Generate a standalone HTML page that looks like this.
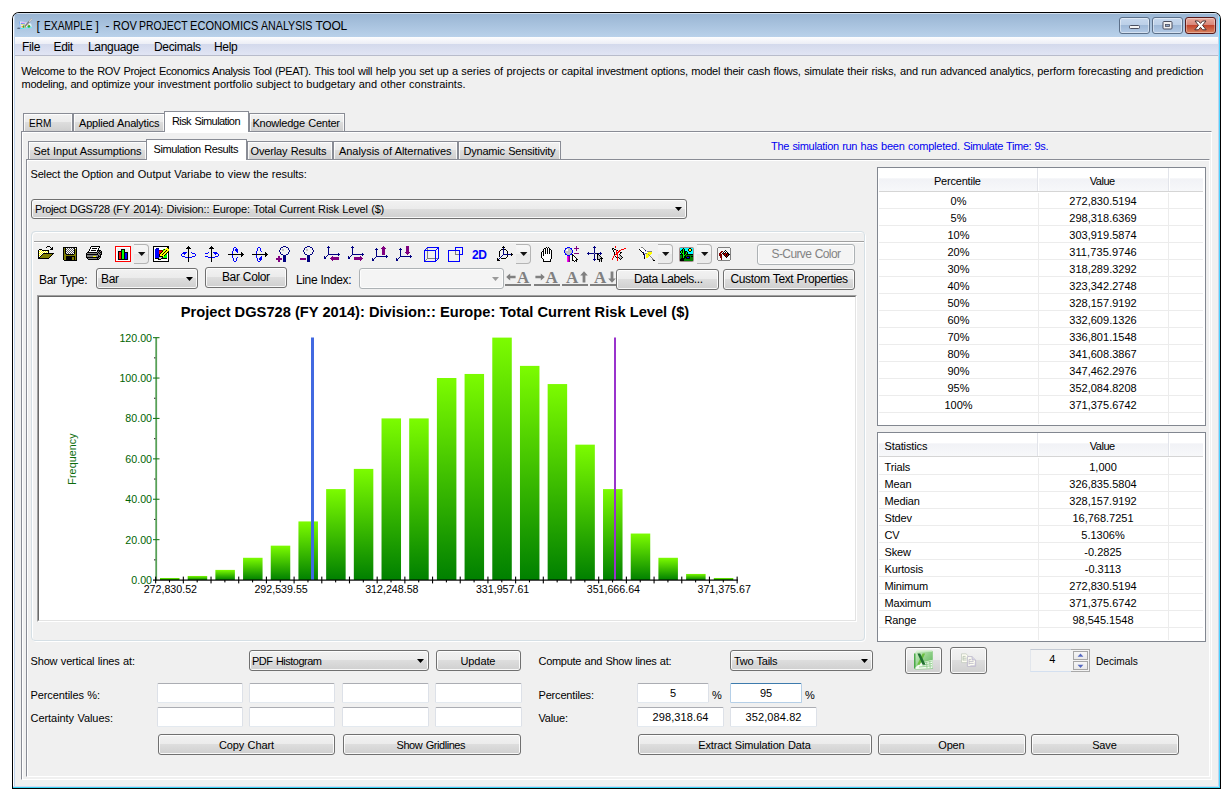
<!DOCTYPE html>
<html lang="en"><head><meta charset="utf-8"><title>ROV Project Economics Analysis Tool</title>
<style>
html,body{margin:0;padding:0;}
body{width:1232px;height:800px;position:relative;overflow:hidden;background:#fff;font-family:"Liberation Sans",sans-serif;font-size:11px;color:#000;}
div,span.t,svg{position:absolute;box-sizing:border-box;}
span.t{white-space:pre;}
.btn{border:1px solid #707070;border-radius:3px;background:linear-gradient(#f2f2f2 0%,#ebebeb 48%,#dddddd 50%,#cfcfcf 100%);box-shadow:inset 0 0 0 1px rgba(255,255,255,.85);}
.btnd{border:1px solid #adb2b5;border-radius:3px;background:#f4f4f4;box-shadow:inset 0 0 0 1px #fcfcfc;}
.tbx{border:1px solid #dde1e8;border-top-color:#abadb3;border-bottom-color:#e3e9ef;border-radius:1.5px;background:#fff;}
.tbxf{border:1px solid #b5cfe7;border-top-color:#3d7bad;border-radius:1.5px;background:#fff;}
.tab{border:1px solid #898c95;border-bottom:none;background:linear-gradient(#f2f2f2 0%,#ebebeb 48%,#dddddd 50%,#cfcfcf 100%);box-shadow:inset 1px 1px 0 rgba(255,255,255,.8), inset -1px 0 0 rgba(255,255,255,.8);}
.tabs{border:1px solid #898c95;border-bottom:none;background:#fff;}
.lv{border:1px solid #828790;background:#fff;}
.hdr{background:linear-gradient(#fff 0%,#fff 45%,#f1f2f6 46%,#f7f8fa 100%);border-bottom:1px solid #d5d5d5;}

</style></head>
<body>
<div style="left:12px;top:12px;width:1209px;height:777px;background:#000;border-radius:7px 7px 0 0;"></div>
<div style="left:13px;top:13px;width:1207px;height:775px;background:#f0f0f0;border-radius:6px 6px 0 0;overflow:hidden;"><div style="left:0;top:0;width:1207px;height:24px;background:linear-gradient(#98b4d2,#b9d1ea);"></div><div style="left:0;top:0;width:1207px;height:1px;background:rgba(255,255,255,.55);"></div><div style="left:0;top:24px;width:1207px;height:18px;background:linear-gradient(#fdfdfe 0%,#eceef6 38%,#d3d9ec 39%,#e1e5f4 100%);"></div><div style="left:0;top:42px;width:1207px;height:1px;background:#b8bccb;"></div><div style="left:0;top:0;width:1px;height:775px;background:#fff;"></div><div style="left:1px;top:0;width:1px;height:775px;background:#c0d4ec;"></div><div style="left:1205px;top:0;width:1px;height:775px;background:#c0d4ec;"></div><div style="left:0;top:773px;width:1207px;height:1px;background:#d4daf0;"></div><div style="left:1206px;top:0;width:1px;height:775px;background:#4fd4ff;"></div><div style="left:0;top:774px;width:1207px;height:1px;background:#35d4f4;"></div></div>
<svg style="left:15px;top:15px" width="22" height="20" viewBox="0 0 22 20"><ellipse cx="4.4" cy="13.3" rx="2.4" ry=".8" fill="#2a3850" opacity=".7"/><path d="M4 5.9 L16 8.2 L17 12.5 L5 14 Z" fill="#e2f2fb"/><path d="M4 5.9 L4.9 6.1 L5.8 13.9 L5 14 Z" fill="#6f9fe8"/><path d="M4 5.9 L16 8.2 L16.1 8.8 L4.1 6.6 Z" fill="#a9c8f2"/><path d="M5.6 13.1 L16.9 11.8 L17 12.5 L5.7 13.95 Z" fill="#43e6ee"/><path d="M5.9 7.1 L11.6 7.7 L11.6 8.5 L5.9 7.9 Z" fill="#f2a4ea"/><path d="M5.9 8.2 L9.9 8.6 L9.9 9.4 L5.9 9 Z" fill="#3c6cf0"/><path d="M5.9 9.3 L9.9 9.6 L9.9 10.3 L5.9 10 Z" fill="#efe24a"/><circle cx="7.3" cy="11.7" r=".85" fill="#f09433"/><rect x="8" y="10.4" width="1.3" height="2.4" fill="#2fb02f"/><circle cx="10.3" cy="11.9" r=".8" fill="#f09433"/><circle cx="13.9" cy="11.3" r="1.35" fill="#2fb02f"/><circle cx="13.5" cy="10" r=".6" fill="#d89030"/><path d="M16.4 4.3 L10.2 10.9" stroke="#7e7e7e" stroke-width="1.5" stroke-linecap="round"/><path d="M16.6 4.1 L14.6 6.2" stroke="#d4d4d4" stroke-width="1.3" stroke-linecap="round"/></svg>
<span class="t" style="left:44.00px;top:19px;font-size:12px;line-height:14px;transform:scaleX(0.8571);transform-origin:0 0;">EXAMPLE</span>
<span class="t" style="left:112.80px;top:19px;font-size:12px;line-height:14px;transform:scaleX(0.9225);transform-origin:0 0;">ROV</span>
<span class="t" style="left:139.30px;top:19px;font-size:12px;line-height:14px;transform:scaleX(0.8658);transform-origin:0 0;">PROJECT</span>
<span class="t" style="left:190.40px;top:19px;font-size:12px;line-height:14px;transform:scaleX(0.9241);transform-origin:0 0;">ECONOMICS</span>
<span class="t" style="left:261.40px;top:19px;font-size:12px;line-height:14px;transform:scaleX(0.8891);transform-origin:0 0;">ANALYSIS</span>
<span class="t" style="left:315.40px;top:19px;font-size:12px;line-height:14px;letter-spacing:-0.223px;">TOOL</span>
<span class="t" style="left:36.50px;top:19px;font-size:12px;line-height:14px;">[</span>
<span class="t" style="left:95.50px;top:19px;font-size:12px;line-height:14px;">]</span>
<span class="t" style="left:105.50px;top:19px;font-size:12px;line-height:14px;">-</span>
<span class="t" style="left:22.00px;top:40px;font-size:12px;line-height:14px;letter-spacing:-0.330px;">File</span>
<span class="t" style="left:53.50px;top:40px;font-size:12px;line-height:14px;letter-spacing:-0.330px;">Edit</span>
<span class="t" style="left:88.00px;top:40px;font-size:12px;line-height:14px;letter-spacing:-0.330px;">Language</span>
<span class="t" style="left:154.00px;top:40px;font-size:12px;line-height:14px;letter-spacing:-0.330px;">Decimals</span>
<span class="t" style="left:214.00px;top:40px;font-size:12px;line-height:14px;letter-spacing:-0.330px;">Help</span>
<div style="left:1119px;top:17px;width:31px;height:17px;border:1px solid #5c7089;border-radius:3px;background:linear-gradient(#c6d8ee 0%,#bcd0e8 45%,#9fb9d8 50%,#b3cae6 100%);box-shadow:inset 0 0 0 1px rgba(255,255,255,.45);"></div>
<div style="left:1152px;top:17px;width:31px;height:17px;border:1px solid #5c7089;border-radius:3px;background:linear-gradient(#c6d8ee 0%,#bcd0e8 45%,#9fb9d8 50%,#b3cae6 100%);box-shadow:inset 0 0 0 1px rgba(255,255,255,.45);"></div>
<div style="left:1185px;top:17px;width:31px;height:17px;border:1px solid #5a1a1a;border-radius:3px;background:linear-gradient(#e9ab9d 0%,#d9877a 45%,#c4452d 50%,#d8835f 100%);box-shadow:inset 0 0 0 1px rgba(255,255,255,.35);"></div>
<svg style="left:1119px;top:17px" width="31" height="17" viewBox="0 0 31 17"><rect x="10.5" y="8.5" width="10" height="3" rx="1" fill="#f4f4f4" stroke="#4a4f60"/></svg>
<svg style="left:1152px;top:17px" width="31" height="17" viewBox="0 0 31 17"><rect x="11" y="4.5" width="9" height="7.5" rx="1" fill="#f0f0f0" stroke="#4a4f60"/><rect x="13.5" y="7.5" width="4" height="2" fill="#8ea5c6" stroke="#4a4f60" stroke-width=".8"/></svg>
<svg style="left:1185px;top:17px" width="31" height="17" viewBox="0 0 31 17"><path d="M10 4 L13.4 4 L15.5 6.4 L17.6 4 L21 4 L17.5 8.3 L21.2 12.8 L17.6 12.8 L15.5 10.3 L13.4 12.8 L9.8 12.8 L13.5 8.3 Z" fill="#fff" stroke="#4a3434" stroke-width="1"/></svg>
<span class="t" style="left:21.30px;top:65px;font-size:11px;line-height:12px;letter-spacing:-0.362px;word-spacing:0.712px;">Welcome to the ROV Project</span>
<span class="t" style="left:159.00px;top:65px;font-size:11px;line-height:12px;letter-spacing:-0.395px;word-spacing:0.745px;">Economics Analysis Tool (PEAT).</span>
<span class="t" style="left:314.50px;top:65px;font-size:11px;line-height:12px;letter-spacing:-0.237px;word-spacing:0.587px;">This tool will help you set up a</span>
<span class="t" style="left:461.25px;top:65px;font-size:11px;line-height:12px;letter-spacing:-0.012px;word-spacing:0.362px;">series of projects or capital</span>
<span class="t" style="left:596.50px;top:65px;font-size:11px;line-height:12px;letter-spacing:-0.207px;word-spacing:0.557px;">investment options, model their</span>
<span class="t" style="left:747.50px;top:65px;font-size:11px;line-height:12px;letter-spacing:-0.150px;word-spacing:0.500px;">cash flows, simulate their risks,</span>
<span class="t" style="left:900.00px;top:65px;font-size:11px;line-height:12px;letter-spacing:-0.175px;word-spacing:0.525px;">and run advanced analytics,</span>
<span class="t" style="left:1037.30px;top:65px;font-size:11px;line-height:12px;letter-spacing:-0.060px;word-spacing:0.410px;">perform forecasting and prediction</span>
<span class="t" style="left:21.50px;top:78px;font-size:11px;line-height:12px;letter-spacing:-0.245px;word-spacing:0.595px;">modeling, and optimize your</span>
<span class="t" style="left:157.75px;top:78px;font-size:11px;line-height:12px;letter-spacing:-0.049px;word-spacing:0.399px;">investment portfolio subject to</span>
<span class="t" style="left:306.25px;top:78px;font-size:11px;line-height:12px;letter-spacing:0.016px;word-spacing:0.334px;">budgetary and other constraints.</span>
<div style="left:21px;top:131px;width:1191px;height:649px;border-left:1px solid #898c95;border-top:1px solid #898c95;border-right:1px solid #fff;border-bottom:1px solid #fff;"></div>
<div style="left:22px;top:132px;width:1189px;height:647px;border-left:1px solid #fff;border-top:1px solid #fff;"></div>
<div class="tab" style="left:23px;top:113px;width:50px;height:18px;"></div>
<span class="t" style="left:28.50px;top:117px;font-size:11px;line-height:12px;transform:scaleX(0.9119);transform-origin:0 0;">ERM</span>
<div class="tab" style="left:73px;top:113px;width:92px;height:18px;"></div>
<span class="t" style="left:79.00px;top:117px;font-size:11px;line-height:12px;letter-spacing:-0.201px;word-spacing:0.551px;">Applied Analytics</span>
<div class="tab" style="left:249px;top:113px;width:96px;height:18px;"></div>
<span class="t" style="left:252.50px;top:117px;font-size:11px;line-height:12px;letter-spacing:-0.240px;word-spacing:0.590px;">Knowledge Center</span>
<div class="tabs" style="left:164px;top:111px;width:85px;height:21px;"></div>
<span class="t" style="left:172.00px;top:115px;font-size:11px;line-height:12px;letter-spacing:-0.589px;word-spacing:0.939px;">Risk Simulation</span>
<div style="left:26px;top:159px;width:1184px;height:618px;border-left:1px solid #898c95;border-top:1px solid #898c95;border-right:1px solid #fff;border-bottom:1px solid #fff;"></div>
<div style="left:27px;top:160px;width:1182px;height:616px;border-left:1px solid #fff;border-top:1px solid #fff;"></div>
<div class="tab" style="left:28px;top:141px;width:119px;height:18px;"></div>
<span class="t" style="left:33.50px;top:145px;font-size:11px;line-height:12px;letter-spacing:-0.120px;word-spacing:0.470px;">Set Input Assumptions</span>
<div class="tab" style="left:247px;top:141px;width:86px;height:18px;"></div>
<span class="t" style="left:250.50px;top:145px;font-size:11px;line-height:12px;letter-spacing:-0.153px;word-spacing:0.503px;">Overlay Results</span>
<div class="tab" style="left:333px;top:141px;width:125px;height:18px;"></div>
<span class="t" style="left:339.00px;top:145px;font-size:11px;line-height:12px;letter-spacing:-0.063px;word-spacing:0.413px;">Analysis of Alternatives</span>
<div class="tab" style="left:458px;top:141px;width:103px;height:18px;"></div>
<span class="t" style="left:463.50px;top:145px;font-size:11px;line-height:12px;letter-spacing:-0.218px;word-spacing:0.568px;">Dynamic Sensitivity</span>
<div class="tabs" style="left:146px;top:139px;width:101px;height:21px;"></div>
<span class="t" style="left:153.50px;top:143px;font-size:11px;line-height:12px;letter-spacing:-0.403px;word-spacing:0.753px;">Simulation Results</span>
<span class="t" style="left:771.00px;top:140px;font-size:11px;line-height:12px;color:#0000f0;letter-spacing:-0.313px;word-spacing:0.663px;">The simulation run has</span>
<span class="t" style="left:881.00px;top:140px;font-size:11px;line-height:12px;color:#0000f0;letter-spacing:-0.207px;word-spacing:0.557px;">been completed.</span>
<span class="t" style="left:963.30px;top:140px;font-size:11px;line-height:12px;color:#0000f0;letter-spacing:-0.399px;word-spacing:0.749px;">Simulate Time: 9s.</span>
<span class="t" style="left:30.50px;top:168px;font-size:11px;line-height:12px;letter-spacing:-0.173px;word-spacing:0.523px;">Select the Option and</span>
<span class="t" style="left:137.70px;top:168px;font-size:11px;line-height:12px;letter-spacing:0.043px;word-spacing:0.307px;">Output Variabe to view</span>
<span class="t" style="left:253.30px;top:168px;font-size:11px;line-height:12px;letter-spacing:-0.066px;word-spacing:0.416px;">the results:</span>
<div class="btn" style="left:31px;top:199px;width:656px;height:20px;"></div>
<svg style="left:675px;top:207px" width="8" height="5" viewBox="0 0 8 5"><path d="M0 0 L7 0 L3.5 4 Z" fill="#000"/></svg>
<span class="t" style="left:35.00px;top:203px;font-size:11px;line-height:12px;letter-spacing:-0.398px;word-spacing:0.748px;">Project DGS728 (FY</span>
<span class="t" style="left:133.20px;top:203px;font-size:11px;line-height:12px;letter-spacing:-0.198px;word-spacing:0.548px;">2014): Division:: Europe:</span>
<span class="t" style="left:253.30px;top:203px;font-size:11px;line-height:12px;letter-spacing:-0.160px;word-spacing:0.510px;">Total Current Risk Level ($)</span>
<div style="left:32px;top:232px;width:834px;height:410px;border:1px solid #fff;border-radius:4px;"></div>
<div style="left:31px;top:231px;width:834px;height:410px;border:1px solid #d5dfe5;border-radius:4px;"></div>
<div style="left:34px;top:241px;width:830px;height:1px;background:#a0a0a0;"></div>
<div style="left:34px;top:242px;width:830px;height:1px;background:#fff;"></div>
<svg style="left:38px;top:246px" width="16" height="13" viewBox="0 0 16 13" shape-rendering="crispEdges"><rect x="9" y="0" width="3" height="1" fill="#000"/><rect x="8" y="1" width="1" height="1" fill="#000"/><rect x="12" y="1" width="1" height="1" fill="#000"/><rect x="14" y="1" width="1" height="1" fill="#000"/><rect x="13" y="2" width="2" height="1" fill="#000"/><rect x="1" y="3" width="3" height="1" fill="#000"/><rect x="12" y="3" width="3" height="1" fill="#000"/><rect x="0" y="4" width="1" height="1" fill="#000"/><rect x="1" y="4" width="1" height="1" fill="#ffffff"/><rect x="2" y="4" width="1" height="1" fill="#ffff00"/><rect x="3" y="4" width="1" height="1" fill="#ffffff"/><rect x="4" y="4" width="7" height="1" fill="#000"/><rect x="0" y="5" width="1" height="1" fill="#000"/><rect x="1" y="5" width="1" height="1" fill="#ffff00"/><rect x="2" y="5" width="1" height="1" fill="#ffffff"/><rect x="3" y="5" width="1" height="1" fill="#ffff00"/><rect x="4" y="5" width="1" height="1" fill="#ffffff"/><rect x="5" y="5" width="1" height="1" fill="#ffff00"/><rect x="6" y="5" width="1" height="1" fill="#ffffff"/><rect x="7" y="5" width="1" height="1" fill="#ffff00"/><rect x="8" y="5" width="1" height="1" fill="#ffffff"/><rect x="9" y="5" width="1" height="1" fill="#ffff00"/><rect x="10" y="5" width="1" height="1" fill="#000"/><rect x="0" y="6" width="1" height="1" fill="#000"/><rect x="1" y="6" width="1" height="1" fill="#ffffff"/><rect x="2" y="6" width="1" height="1" fill="#ffff00"/><rect x="3" y="6" width="1" height="1" fill="#ffffff"/><rect x="4" y="6" width="1" height="1" fill="#ffff00"/><rect x="5" y="6" width="1" height="1" fill="#ffffff"/><rect x="6" y="6" width="1" height="1" fill="#ffff00"/><rect x="7" y="6" width="1" height="1" fill="#ffffff"/><rect x="8" y="6" width="1" height="1" fill="#ffff00"/><rect x="9" y="6" width="1" height="1" fill="#ffffff"/><rect x="10" y="6" width="1" height="1" fill="#000"/><rect x="0" y="7" width="1" height="1" fill="#000"/><rect x="1" y="7" width="1" height="1" fill="#ffff00"/><rect x="2" y="7" width="1" height="1" fill="#ffffff"/><rect x="3" y="7" width="1" height="1" fill="#ffff00"/><rect x="4" y="7" width="1" height="1" fill="#ffffff"/><rect x="5" y="7" width="11" height="1" fill="#000"/><rect x="0" y="8" width="1" height="1" fill="#000"/><rect x="1" y="8" width="1" height="1" fill="#ffffff"/><rect x="2" y="8" width="1" height="1" fill="#ffff00"/><rect x="3" y="8" width="1" height="1" fill="#ffffff"/><rect x="4" y="8" width="1" height="1" fill="#000"/><rect x="5" y="8" width="9" height="1" fill="#808000"/><rect x="14" y="8" width="1" height="1" fill="#000"/><rect x="0" y="9" width="1" height="1" fill="#000"/><rect x="1" y="9" width="1" height="1" fill="#ffff00"/><rect x="2" y="9" width="1" height="1" fill="#ffffff"/><rect x="3" y="9" width="1" height="1" fill="#000"/><rect x="4" y="9" width="9" height="1" fill="#808000"/><rect x="13" y="9" width="1" height="1" fill="#000"/><rect x="0" y="10" width="1" height="1" fill="#000"/><rect x="1" y="10" width="1" height="1" fill="#ffffff"/><rect x="2" y="10" width="1" height="1" fill="#000"/><rect x="3" y="10" width="9" height="1" fill="#808000"/><rect x="12" y="10" width="1" height="1" fill="#000"/><rect x="0" y="11" width="2" height="1" fill="#000"/><rect x="2" y="11" width="9" height="1" fill="#808000"/><rect x="11" y="11" width="1" height="1" fill="#000"/><rect x="0" y="12" width="11" height="1" fill="#000"/></svg>
<svg style="left:63px;top:247px" width="14" height="14" viewBox="0 0 14 14" shape-rendering="crispEdges"><rect x="0" y="0" width="14" height="1" fill="#000"/><rect x="0" y="1" width="1" height="1" fill="#000"/><rect x="1" y="1" width="1" height="1" fill="#808000"/><rect x="2" y="1" width="1" height="1" fill="#000"/><rect x="3" y="1" width="1" height="1" fill="#ffffff"/><rect x="4" y="1" width="1" height="1" fill="#606060"/><rect x="5" y="1" width="1" height="1" fill="#ffffff"/><rect x="6" y="1" width="1" height="1" fill="#606060"/><rect x="7" y="1" width="1" height="1" fill="#ffffff"/><rect x="8" y="1" width="1" height="1" fill="#606060"/><rect x="9" y="1" width="1" height="1" fill="#ffffff"/><rect x="10" y="1" width="1" height="1" fill="#606060"/><rect x="11" y="1" width="1" height="1" fill="#000"/><rect x="12" y="1" width="1" height="1" fill="#fff"/><rect x="13" y="1" width="1" height="1" fill="#000"/><rect x="0" y="2" width="1" height="1" fill="#000"/><rect x="1" y="2" width="1" height="1" fill="#808000"/><rect x="2" y="2" width="1" height="1" fill="#000"/><rect x="3" y="2" width="1" height="1" fill="#606060"/><rect x="4" y="2" width="1" height="1" fill="#ffffff"/><rect x="5" y="2" width="1" height="1" fill="#606060"/><rect x="6" y="2" width="1" height="1" fill="#ffffff"/><rect x="7" y="2" width="1" height="1" fill="#606060"/><rect x="8" y="2" width="1" height="1" fill="#ffffff"/><rect x="9" y="2" width="1" height="1" fill="#606060"/><rect x="10" y="2" width="1" height="1" fill="#ffffff"/><rect x="11" y="2" width="1" height="1" fill="#000"/><rect x="12" y="2" width="1" height="1" fill="#808000"/><rect x="13" y="2" width="1" height="1" fill="#000"/><rect x="0" y="3" width="1" height="1" fill="#000"/><rect x="1" y="3" width="1" height="1" fill="#808000"/><rect x="2" y="3" width="1" height="1" fill="#000"/><rect x="3" y="3" width="1" height="1" fill="#ffffff"/><rect x="4" y="3" width="1" height="1" fill="#606060"/><rect x="5" y="3" width="1" height="1" fill="#ffffff"/><rect x="6" y="3" width="1" height="1" fill="#606060"/><rect x="7" y="3" width="1" height="1" fill="#ffffff"/><rect x="8" y="3" width="1" height="1" fill="#606060"/><rect x="9" y="3" width="1" height="1" fill="#ffffff"/><rect x="10" y="3" width="1" height="1" fill="#606060"/><rect x="11" y="3" width="1" height="1" fill="#000"/><rect x="12" y="3" width="1" height="1" fill="#808000"/><rect x="13" y="3" width="1" height="1" fill="#000"/><rect x="0" y="4" width="1" height="1" fill="#000"/><rect x="1" y="4" width="1" height="1" fill="#808000"/><rect x="2" y="4" width="1" height="1" fill="#000"/><rect x="3" y="4" width="1" height="1" fill="#606060"/><rect x="4" y="4" width="1" height="1" fill="#ffffff"/><rect x="5" y="4" width="1" height="1" fill="#606060"/><rect x="6" y="4" width="1" height="1" fill="#ffffff"/><rect x="7" y="4" width="1" height="1" fill="#606060"/><rect x="8" y="4" width="1" height="1" fill="#ffffff"/><rect x="9" y="4" width="1" height="1" fill="#606060"/><rect x="10" y="4" width="1" height="1" fill="#ffffff"/><rect x="11" y="4" width="1" height="1" fill="#000"/><rect x="12" y="4" width="1" height="1" fill="#808000"/><rect x="13" y="4" width="1" height="1" fill="#000"/><rect x="0" y="5" width="1" height="1" fill="#000"/><rect x="1" y="5" width="1" height="1" fill="#808000"/><rect x="2" y="5" width="1" height="1" fill="#000"/><rect x="3" y="5" width="1" height="1" fill="#ffffff"/><rect x="4" y="5" width="1" height="1" fill="#606060"/><rect x="5" y="5" width="1" height="1" fill="#ffffff"/><rect x="6" y="5" width="1" height="1" fill="#606060"/><rect x="7" y="5" width="1" height="1" fill="#ffffff"/><rect x="8" y="5" width="1" height="1" fill="#606060"/><rect x="9" y="5" width="1" height="1" fill="#ffffff"/><rect x="10" y="5" width="1" height="1" fill="#606060"/><rect x="11" y="5" width="1" height="1" fill="#000"/><rect x="12" y="5" width="1" height="1" fill="#808000"/><rect x="13" y="5" width="1" height="1" fill="#000"/><rect x="0" y="6" width="1" height="1" fill="#000"/><rect x="1" y="6" width="1" height="1" fill="#808000"/><rect x="2" y="6" width="1" height="1" fill="#000"/><rect x="3" y="6" width="1" height="1" fill="#606060"/><rect x="4" y="6" width="1" height="1" fill="#ffffff"/><rect x="5" y="6" width="1" height="1" fill="#606060"/><rect x="6" y="6" width="1" height="1" fill="#ffffff"/><rect x="7" y="6" width="1" height="1" fill="#606060"/><rect x="8" y="6" width="1" height="1" fill="#ffffff"/><rect x="9" y="6" width="1" height="1" fill="#606060"/><rect x="10" y="6" width="1" height="1" fill="#ffffff"/><rect x="11" y="6" width="1" height="1" fill="#000"/><rect x="12" y="6" width="1" height="1" fill="#808000"/><rect x="13" y="6" width="1" height="1" fill="#000"/><rect x="0" y="7" width="1" height="1" fill="#000"/><rect x="1" y="7" width="2" height="1" fill="#808000"/><rect x="3" y="7" width="8" height="1" fill="#000"/><rect x="11" y="7" width="2" height="1" fill="#808000"/><rect x="13" y="7" width="1" height="1" fill="#000"/><rect x="0" y="8" width="1" height="1" fill="#000"/><rect x="1" y="8" width="12" height="1" fill="#808000"/><rect x="13" y="8" width="1" height="1" fill="#000"/><rect x="0" y="9" width="1" height="1" fill="#000"/><rect x="1" y="9" width="2" height="1" fill="#808000"/><rect x="3" y="9" width="9" height="1" fill="#000"/><rect x="12" y="9" width="1" height="1" fill="#808000"/><rect x="13" y="9" width="1" height="1" fill="#000"/><rect x="0" y="10" width="1" height="1" fill="#000"/><rect x="1" y="10" width="2" height="1" fill="#808000"/><rect x="3" y="10" width="6" height="1" fill="#000"/><rect x="9" y="10" width="2" height="1" fill="#808000"/><rect x="11" y="10" width="1" height="1" fill="#000"/><rect x="12" y="10" width="1" height="1" fill="#808000"/><rect x="13" y="10" width="1" height="1" fill="#000"/><rect x="0" y="11" width="1" height="1" fill="#000"/><rect x="1" y="11" width="2" height="1" fill="#808000"/><rect x="3" y="11" width="6" height="1" fill="#000"/><rect x="9" y="11" width="2" height="1" fill="#808000"/><rect x="11" y="11" width="1" height="1" fill="#000"/><rect x="12" y="11" width="1" height="1" fill="#808000"/><rect x="13" y="11" width="1" height="1" fill="#000"/><rect x="0" y="12" width="1" height="1" fill="#000"/><rect x="1" y="12" width="2" height="1" fill="#808000"/><rect x="3" y="12" width="6" height="1" fill="#000"/><rect x="9" y="12" width="2" height="1" fill="#808000"/><rect x="11" y="12" width="1" height="1" fill="#000"/><rect x="12" y="12" width="1" height="1" fill="#808000"/><rect x="13" y="12" width="1" height="1" fill="#000"/><rect x="1" y="13" width="13" height="1" fill="#000"/></svg>
<svg style="left:86px;top:246px" width="16" height="14" viewBox="0 0 16 14" shape-rendering="crispEdges"><rect x="5" y="0" width="9" height="1" fill="#000"/><rect x="4" y="1" width="1" height="1" fill="#000"/><rect x="5" y="1" width="8" height="1" fill="#fff"/><rect x="13" y="1" width="1" height="1" fill="#000"/><rect x="4" y="2" width="1" height="1" fill="#000"/><rect x="5" y="2" width="1" height="1" fill="#fff"/><rect x="6" y="2" width="5" height="1" fill="#000"/><rect x="11" y="2" width="1" height="1" fill="#fff"/><rect x="12" y="2" width="1" height="1" fill="#000"/><rect x="3" y="3" width="1" height="1" fill="#000"/><rect x="4" y="3" width="8" height="1" fill="#fff"/><rect x="12" y="3" width="1" height="1" fill="#000"/><rect x="3" y="4" width="1" height="1" fill="#000"/><rect x="4" y="4" width="1" height="1" fill="#fff"/><rect x="5" y="4" width="5" height="1" fill="#000"/><rect x="10" y="4" width="1" height="1" fill="#fff"/><rect x="11" y="4" width="4" height="1" fill="#000"/><rect x="2" y="5" width="1" height="1" fill="#000"/><rect x="3" y="5" width="8" height="1" fill="#fff"/><rect x="11" y="5" width="1" height="1" fill="#000"/><rect x="12" y="5" width="1" height="1" fill="#808080"/><rect x="13" y="5" width="1" height="1" fill="#000"/><rect x="14" y="5" width="1" height="1" fill="#808080"/><rect x="15" y="5" width="1" height="1" fill="#000"/><rect x="1" y="6" width="10" height="1" fill="#000"/><rect x="11" y="6" width="1" height="1" fill="#808080"/><rect x="12" y="6" width="1" height="1" fill="#000"/><rect x="13" y="6" width="1" height="1" fill="#808080"/><rect x="14" y="6" width="2" height="1" fill="#000"/><rect x="0" y="7" width="1" height="1" fill="#000"/><rect x="1" y="7" width="10" height="1" fill="#808080"/><rect x="11" y="7" width="1" height="1" fill="#000"/><rect x="12" y="7" width="1" height="1" fill="#808080"/><rect x="13" y="7" width="1" height="1" fill="#000"/><rect x="14" y="7" width="1" height="1" fill="#808080"/><rect x="15" y="7" width="1" height="1" fill="#000"/><rect x="0" y="8" width="12" height="1" fill="#000"/><rect x="12" y="8" width="2" height="1" fill="#808080"/><rect x="14" y="8" width="2" height="1" fill="#000"/><rect x="0" y="9" width="1" height="1" fill="#000"/><rect x="1" y="9" width="11" height="1" fill="#808080"/><rect x="12" y="9" width="1" height="1" fill="#000"/><rect x="13" y="9" width="1" height="1" fill="#808080"/><rect x="14" y="9" width="1" height="1" fill="#000"/><rect x="0" y="10" width="1" height="1" fill="#000"/><rect x="1" y="10" width="6" height="1" fill="#808080"/><rect x="7" y="10" width="3" height="1" fill="#ffff00"/><rect x="10" y="10" width="2" height="1" fill="#808080"/><rect x="12" y="10" width="3" height="1" fill="#000"/><rect x="0" y="11" width="13" height="1" fill="#000"/><rect x="13" y="11" width="1" height="1" fill="#808080"/><rect x="14" y="11" width="1" height="1" fill="#000"/><rect x="1" y="12" width="1" height="1" fill="#000"/><rect x="2" y="12" width="9" height="1" fill="#808080"/><rect x="11" y="12" width="1" height="1" fill="#000"/><rect x="12" y="12" width="1" height="1" fill="#808080"/><rect x="13" y="12" width="1" height="1" fill="#000"/><rect x="2" y="13" width="11" height="1" fill="#000"/></svg>
<svg style="left:115px;top:246px" width="16" height="16" viewBox="0 0 16 16" shape-rendering="crispEdges"><rect x="0" y="0" width="16" height="1" fill="#ff0000"/><rect x="0" y="1" width="1" height="1" fill="#ff0000"/><rect x="1" y="1" width="14" height="1" fill="#fff"/><rect x="15" y="1" width="1" height="1" fill="#ff0000"/><rect x="0" y="2" width="1" height="1" fill="#ff0000"/><rect x="1" y="2" width="1" height="1" fill="#fff"/><rect x="14" y="2" width="1" height="1" fill="#fff"/><rect x="15" y="2" width="1" height="1" fill="#ff0000"/><rect x="0" y="3" width="1" height="1" fill="#ff0000"/><rect x="1" y="3" width="1" height="1" fill="#fff"/><rect x="6" y="3" width="4" height="1" fill="#000"/><rect x="14" y="3" width="1" height="1" fill="#fff"/><rect x="15" y="3" width="1" height="1" fill="#ff0000"/><rect x="0" y="4" width="1" height="1" fill="#ff0000"/><rect x="1" y="4" width="1" height="1" fill="#fff"/><rect x="6" y="4" width="1" height="1" fill="#000"/><rect x="7" y="4" width="2" height="1" fill="#00ff00"/><rect x="9" y="4" width="1" height="1" fill="#000"/><rect x="14" y="4" width="1" height="1" fill="#fff"/><rect x="15" y="4" width="1" height="1" fill="#ff0000"/><rect x="0" y="5" width="1" height="1" fill="#ff0000"/><rect x="1" y="5" width="1" height="1" fill="#fff"/><rect x="3" y="5" width="4" height="1" fill="#000"/><rect x="7" y="5" width="2" height="1" fill="#00ff00"/><rect x="9" y="5" width="1" height="1" fill="#000"/><rect x="14" y="5" width="1" height="1" fill="#fff"/><rect x="15" y="5" width="1" height="1" fill="#ff0000"/><rect x="0" y="6" width="1" height="1" fill="#ff0000"/><rect x="1" y="6" width="1" height="1" fill="#fff"/><rect x="3" y="6" width="1" height="1" fill="#000"/><rect x="4" y="6" width="2" height="1" fill="#ff0000"/><rect x="6" y="6" width="1" height="1" fill="#000"/><rect x="7" y="6" width="2" height="1" fill="#00ff00"/><rect x="9" y="6" width="4" height="1" fill="#000"/><rect x="14" y="6" width="1" height="1" fill="#fff"/><rect x="15" y="6" width="1" height="1" fill="#ff0000"/><rect x="0" y="7" width="1" height="1" fill="#ff0000"/><rect x="1" y="7" width="1" height="1" fill="#fff"/><rect x="3" y="7" width="1" height="1" fill="#000"/><rect x="4" y="7" width="2" height="1" fill="#ff0000"/><rect x="6" y="7" width="1" height="1" fill="#000"/><rect x="7" y="7" width="2" height="1" fill="#00ff00"/><rect x="9" y="7" width="1" height="1" fill="#000"/><rect x="10" y="7" width="2" height="1" fill="#0000ff"/><rect x="12" y="7" width="1" height="1" fill="#000"/><rect x="14" y="7" width="1" height="1" fill="#fff"/><rect x="15" y="7" width="1" height="1" fill="#ff0000"/><rect x="0" y="8" width="1" height="1" fill="#ff0000"/><rect x="1" y="8" width="1" height="1" fill="#fff"/><rect x="3" y="8" width="1" height="1" fill="#000"/><rect x="4" y="8" width="2" height="1" fill="#ff0000"/><rect x="6" y="8" width="1" height="1" fill="#000"/><rect x="7" y="8" width="2" height="1" fill="#00ff00"/><rect x="9" y="8" width="1" height="1" fill="#000"/><rect x="10" y="8" width="2" height="1" fill="#0000ff"/><rect x="12" y="8" width="1" height="1" fill="#000"/><rect x="14" y="8" width="1" height="1" fill="#fff"/><rect x="15" y="8" width="1" height="1" fill="#ff0000"/><rect x="0" y="9" width="1" height="1" fill="#ff0000"/><rect x="1" y="9" width="1" height="1" fill="#fff"/><rect x="3" y="9" width="1" height="1" fill="#000"/><rect x="4" y="9" width="2" height="1" fill="#ff0000"/><rect x="6" y="9" width="1" height="1" fill="#000"/><rect x="7" y="9" width="2" height="1" fill="#00ff00"/><rect x="9" y="9" width="1" height="1" fill="#000"/><rect x="10" y="9" width="2" height="1" fill="#0000ff"/><rect x="12" y="9" width="1" height="1" fill="#000"/><rect x="14" y="9" width="1" height="1" fill="#fff"/><rect x="15" y="9" width="1" height="1" fill="#ff0000"/><rect x="0" y="10" width="1" height="1" fill="#ff0000"/><rect x="1" y="10" width="1" height="1" fill="#fff"/><rect x="3" y="10" width="1" height="1" fill="#000"/><rect x="4" y="10" width="2" height="1" fill="#ff0000"/><rect x="6" y="10" width="1" height="1" fill="#000"/><rect x="7" y="10" width="2" height="1" fill="#00ff00"/><rect x="9" y="10" width="1" height="1" fill="#000"/><rect x="10" y="10" width="2" height="1" fill="#0000ff"/><rect x="12" y="10" width="1" height="1" fill="#000"/><rect x="14" y="10" width="1" height="1" fill="#fff"/><rect x="15" y="10" width="1" height="1" fill="#ff0000"/><rect x="0" y="11" width="1" height="1" fill="#ff0000"/><rect x="1" y="11" width="1" height="1" fill="#fff"/><rect x="3" y="11" width="1" height="1" fill="#000"/><rect x="4" y="11" width="2" height="1" fill="#ff0000"/><rect x="6" y="11" width="1" height="1" fill="#000"/><rect x="7" y="11" width="2" height="1" fill="#00ff00"/><rect x="9" y="11" width="1" height="1" fill="#000"/><rect x="10" y="11" width="2" height="1" fill="#0000ff"/><rect x="12" y="11" width="1" height="1" fill="#000"/><rect x="14" y="11" width="1" height="1" fill="#fff"/><rect x="15" y="11" width="1" height="1" fill="#ff0000"/><rect x="0" y="12" width="1" height="1" fill="#ff0000"/><rect x="1" y="12" width="1" height="1" fill="#fff"/><rect x="3" y="12" width="1" height="1" fill="#000"/><rect x="4" y="12" width="2" height="1" fill="#ff0000"/><rect x="6" y="12" width="1" height="1" fill="#000"/><rect x="7" y="12" width="2" height="1" fill="#00ff00"/><rect x="9" y="12" width="1" height="1" fill="#000"/><rect x="10" y="12" width="2" height="1" fill="#0000ff"/><rect x="12" y="12" width="1" height="1" fill="#000"/><rect x="14" y="12" width="1" height="1" fill="#fff"/><rect x="15" y="12" width="1" height="1" fill="#ff0000"/><rect x="0" y="13" width="1" height="1" fill="#ff0000"/><rect x="1" y="13" width="1" height="1" fill="#fff"/><rect x="3" y="13" width="10" height="1" fill="#000"/><rect x="14" y="13" width="1" height="1" fill="#fff"/><rect x="15" y="13" width="1" height="1" fill="#ff0000"/><rect x="0" y="14" width="1" height="1" fill="#ff0000"/><rect x="1" y="14" width="14" height="1" fill="#fff"/><rect x="15" y="14" width="1" height="1" fill="#ff0000"/><rect x="0" y="15" width="16" height="1" fill="#ff0000"/></svg>
<div style="left:134px;top:244px;width:15px;height:20px;border:1px solid #b4b4b4;border-left:none;border-radius:0 4px 4px 0;background:linear-gradient(#f6f6f6 0%,#f2f2f2 48%,#e8e8e8 52%,#ececec 100%);"></div>
<svg style="left:138px;top:252px" width="8" height="5" viewBox="0 0 8 5"><path d="M0 0 L7.4 0 L3.7 4 Z" fill="#111"/></svg>
<svg style="left:153px;top:246px" width="16" height="16" viewBox="0 0 16 16" shape-rendering="crispEdges"><rect x="0" y="0" width="16" height="1" fill="#000"/><rect x="0" y="1" width="1" height="1" fill="#000"/><rect x="1" y="1" width="13" height="1" fill="#fff"/><rect x="14" y="1" width="2" height="1" fill="#000"/><rect x="0" y="2" width="1" height="1" fill="#000"/><rect x="1" y="2" width="2" height="1" fill="#fff"/><rect x="3" y="2" width="3" height="1" fill="#000080"/><rect x="6" y="2" width="7" height="1" fill="#fff"/><rect x="13" y="2" width="2" height="1" fill="#ffff00"/><rect x="15" y="2" width="1" height="1" fill="#000"/><rect x="0" y="3" width="1" height="1" fill="#000"/><rect x="1" y="3" width="1" height="1" fill="#fff"/><rect x="2" y="3" width="4" height="1" fill="#0000ff"/><rect x="6" y="3" width="4" height="1" fill="#fff"/><rect x="10" y="3" width="1" height="1" fill="#00ff00"/><rect x="11" y="3" width="1" height="1" fill="#000"/><rect x="12" y="3" width="4" height="1" fill="#ffff00"/><rect x="0" y="4" width="1" height="1" fill="#000"/><rect x="1" y="4" width="1" height="1" fill="#fff"/><rect x="2" y="4" width="4" height="1" fill="#0000ff"/><rect x="6" y="4" width="4" height="1" fill="#800000"/><rect x="10" y="4" width="1" height="1" fill="#00ff00"/><rect x="11" y="4" width="2" height="1" fill="#ffff00"/><rect x="13" y="4" width="1" height="1" fill="#000"/><rect x="14" y="4" width="2" height="1" fill="#ffff00"/><rect x="0" y="5" width="1" height="1" fill="#000"/><rect x="1" y="5" width="1" height="1" fill="#fff"/><rect x="2" y="5" width="4" height="1" fill="#0000ff"/><rect x="6" y="5" width="3" height="1" fill="#ff0000"/><rect x="9" y="5" width="1" height="1" fill="#000"/><rect x="10" y="5" width="2" height="1" fill="#ffff00"/><rect x="12" y="5" width="1" height="1" fill="#000"/><rect x="13" y="5" width="2" height="1" fill="#ffff00"/><rect x="15" y="5" width="1" height="1" fill="#000"/><rect x="0" y="6" width="1" height="1" fill="#000"/><rect x="1" y="6" width="1" height="1" fill="#fff"/><rect x="2" y="6" width="4" height="1" fill="#0000ff"/><rect x="6" y="6" width="2" height="1" fill="#ff0000"/><rect x="8" y="6" width="1" height="1" fill="#000"/><rect x="9" y="6" width="2" height="1" fill="#ffff00"/><rect x="11" y="6" width="1" height="1" fill="#000"/><rect x="12" y="6" width="2" height="1" fill="#ffff00"/><rect x="14" y="6" width="2" height="1" fill="#000"/><rect x="0" y="7" width="1" height="1" fill="#000"/><rect x="1" y="7" width="1" height="1" fill="#fff"/><rect x="2" y="7" width="4" height="1" fill="#0000ff"/><rect x="6" y="7" width="1" height="1" fill="#ff0000"/><rect x="7" y="7" width="1" height="1" fill="#000"/><rect x="8" y="7" width="2" height="1" fill="#ffff00"/><rect x="10" y="7" width="1" height="1" fill="#000"/><rect x="11" y="7" width="2" height="1" fill="#ffff00"/><rect x="13" y="7" width="1" height="1" fill="#000"/><rect x="14" y="7" width="1" height="1" fill="#fff"/><rect x="15" y="7" width="1" height="1" fill="#000"/><rect x="0" y="8" width="1" height="1" fill="#000"/><rect x="1" y="8" width="1" height="1" fill="#fff"/><rect x="2" y="8" width="4" height="1" fill="#0000ff"/><rect x="6" y="8" width="1" height="1" fill="#000"/><rect x="7" y="8" width="2" height="1" fill="#ffff00"/><rect x="9" y="8" width="1" height="1" fill="#000"/><rect x="10" y="8" width="2" height="1" fill="#ffff00"/><rect x="12" y="8" width="1" height="1" fill="#000"/><rect x="13" y="8" width="1" height="1" fill="#00ff00"/><rect x="14" y="8" width="1" height="1" fill="#fff"/><rect x="15" y="8" width="1" height="1" fill="#000"/><rect x="0" y="9" width="1" height="1" fill="#000"/><rect x="1" y="9" width="1" height="1" fill="#fff"/><rect x="2" y="9" width="4" height="1" fill="#0000ff"/><rect x="6" y="9" width="1" height="1" fill="#000"/><rect x="7" y="9" width="4" height="1" fill="#ffff00"/><rect x="11" y="9" width="1" height="1" fill="#000"/><rect x="12" y="9" width="2" height="1" fill="#00ff00"/><rect x="14" y="9" width="1" height="1" fill="#fff"/><rect x="15" y="9" width="1" height="1" fill="#000"/><rect x="0" y="10" width="1" height="1" fill="#000"/><rect x="1" y="10" width="1" height="1" fill="#fff"/><rect x="2" y="10" width="4" height="1" fill="#0000ff"/><rect x="6" y="10" width="4" height="1" fill="#000"/><rect x="10" y="10" width="1" height="1" fill="#ffff00"/><rect x="11" y="10" width="3" height="1" fill="#00ff00"/><rect x="14" y="10" width="1" height="1" fill="#fff"/><rect x="15" y="10" width="1" height="1" fill="#000"/><rect x="0" y="11" width="1" height="1" fill="#000"/><rect x="1" y="11" width="1" height="1" fill="#fff"/><rect x="2" y="11" width="4" height="1" fill="#0000ff"/><rect x="6" y="11" width="3" height="1" fill="#c0c0c0"/><rect x="9" y="11" width="1" height="1" fill="#000"/><rect x="10" y="11" width="4" height="1" fill="#00ff00"/><rect x="14" y="11" width="1" height="1" fill="#fff"/><rect x="15" y="11" width="1" height="1" fill="#000"/><rect x="0" y="12" width="1" height="1" fill="#000"/><rect x="1" y="12" width="1" height="1" fill="#fff"/><rect x="2" y="12" width="4" height="1" fill="#000"/><rect x="6" y="12" width="2" height="1" fill="#c0c0c0"/><rect x="8" y="12" width="6" height="1" fill="#000"/><rect x="14" y="12" width="1" height="1" fill="#fff"/><rect x="15" y="12" width="1" height="1" fill="#000"/><rect x="0" y="13" width="1" height="1" fill="#000"/><rect x="1" y="13" width="4" height="1" fill="#fff"/><rect x="5" y="13" width="3" height="1" fill="#000"/><rect x="8" y="13" width="7" height="1" fill="#fff"/><rect x="15" y="13" width="1" height="1" fill="#000"/><rect x="0" y="14" width="1" height="1" fill="#000"/><rect x="1" y="14" width="14" height="1" fill="#fff"/><rect x="15" y="14" width="1" height="1" fill="#000"/><rect x="0" y="15" width="16" height="1" fill="#000"/></svg>
<svg style="left:181px;top:246px" width="15" height="16" viewBox="0 0 15 16" shape-rendering="crispEdges"><rect x="7" y="0" width="1" height="1" fill="#000"/><rect x="6" y="1" width="3" height="1" fill="#000"/><rect x="5" y="2" width="5" height="1" fill="#000"/><rect x="7" y="3" width="1" height="1" fill="#000"/><rect x="7" y="4" width="1" height="1" fill="#000"/><rect x="7" y="5" width="1" height="1" fill="#000"/><rect x="2" y="6" width="4" height="1" fill="#0000ff"/><rect x="7" y="6" width="1" height="1" fill="#000"/><rect x="10" y="6" width="1" height="1" fill="#0000ff"/><rect x="1" y="7" width="4" height="1" fill="#0000ff"/><rect x="7" y="7" width="1" height="1" fill="#000"/><rect x="11" y="7" width="3" height="1" fill="#0000ff"/><rect x="0" y="8" width="1" height="1" fill="#0000ff"/><rect x="3" y="8" width="1" height="1" fill="#0000ff"/><rect x="7" y="8" width="1" height="1" fill="#000"/><rect x="14" y="8" width="1" height="1" fill="#0000ff"/><rect x="0" y="9" width="1" height="1" fill="#0000ff"/><rect x="7" y="9" width="1" height="1" fill="#000"/><rect x="14" y="9" width="1" height="1" fill="#0000ff"/><rect x="1" y="10" width="3" height="1" fill="#0000ff"/><rect x="7" y="10" width="1" height="1" fill="#000"/><rect x="11" y="10" width="3" height="1" fill="#0000ff"/><rect x="4" y="11" width="3" height="1" fill="#0000ff"/><rect x="7" y="11" width="1" height="1" fill="#000"/><rect x="8" y="11" width="3" height="1" fill="#0000ff"/><rect x="7" y="12" width="1" height="1" fill="#000"/><rect x="7" y="13" width="1" height="1" fill="#000"/><rect x="7" y="14" width="1" height="1" fill="#000"/><rect x="7" y="15" width="1" height="1" fill="#000"/></svg>
<svg style="left:204px;top:246px" width="15" height="16" viewBox="0 0 15 16" shape-rendering="crispEdges"><rect x="7" y="0" width="1" height="1" fill="#000"/><rect x="6" y="1" width="3" height="1" fill="#000"/><rect x="5" y="2" width="5" height="1" fill="#000"/><rect x="7" y="3" width="1" height="1" fill="#000"/><rect x="7" y="4" width="1" height="1" fill="#000"/><rect x="7" y="5" width="1" height="1" fill="#000"/><rect x="4" y="6" width="1" height="1" fill="#0000ff"/><rect x="7" y="6" width="1" height="1" fill="#000"/><rect x="9" y="6" width="4" height="1" fill="#0000ff"/><rect x="1" y="7" width="3" height="1" fill="#0000ff"/><rect x="7" y="7" width="1" height="1" fill="#000"/><rect x="10" y="7" width="4" height="1" fill="#0000ff"/><rect x="7" y="8" width="1" height="1" fill="#000"/><rect x="11" y="8" width="1" height="1" fill="#0000ff"/><rect x="14" y="8" width="1" height="1" fill="#0000ff"/><rect x="7" y="9" width="1" height="1" fill="#000"/><rect x="14" y="9" width="1" height="1" fill="#0000ff"/><rect x="1" y="10" width="3" height="1" fill="#0000ff"/><rect x="7" y="10" width="1" height="1" fill="#000"/><rect x="11" y="10" width="3" height="1" fill="#0000ff"/><rect x="4" y="11" width="3" height="1" fill="#0000ff"/><rect x="7" y="11" width="1" height="1" fill="#000"/><rect x="8" y="11" width="3" height="1" fill="#0000ff"/><rect x="7" y="12" width="1" height="1" fill="#000"/><rect x="7" y="13" width="1" height="1" fill="#000"/><rect x="7" y="14" width="1" height="1" fill="#000"/><rect x="7" y="15" width="1" height="1" fill="#000"/></svg>
<svg style="left:228px;top:247px" width="16" height="15" viewBox="0 0 16 15" shape-rendering="crispEdges"><rect x="6" y="0" width="2" height="1" fill="#0000ff"/><rect x="5" y="1" width="1" height="1" fill="#0000ff"/><rect x="8" y="1" width="1" height="1" fill="#0000ff"/><rect x="5" y="2" width="1" height="1" fill="#0000ff"/><rect x="7" y="2" width="3" height="1" fill="#0000ff"/><rect x="5" y="3" width="1" height="1" fill="#0000ff"/><rect x="7" y="3" width="3" height="1" fill="#0000ff"/><rect x="4" y="4" width="1" height="1" fill="#0000ff"/><rect x="8" y="4" width="2" height="1" fill="#0000ff"/><rect x="4" y="5" width="1" height="1" fill="#0000ff"/><rect x="9" y="5" width="1" height="1" fill="#0000ff"/><rect x="13" y="5" width="1" height="1" fill="#000"/><rect x="4" y="6" width="1" height="1" fill="#0000ff"/><rect x="13" y="6" width="2" height="1" fill="#000"/><rect x="0" y="7" width="16" height="1" fill="#000"/><rect x="4" y="8" width="1" height="1" fill="#0000ff"/><rect x="13" y="8" width="2" height="1" fill="#000"/><rect x="4" y="9" width="1" height="1" fill="#0000ff"/><rect x="13" y="9" width="1" height="1" fill="#000"/><rect x="4" y="10" width="1" height="1" fill="#0000ff"/><rect x="9" y="10" width="1" height="1" fill="#0000ff"/><rect x="5" y="11" width="1" height="1" fill="#0000ff"/><rect x="8" y="11" width="1" height="1" fill="#0000ff"/><rect x="5" y="12" width="1" height="1" fill="#0000ff"/><rect x="8" y="12" width="1" height="1" fill="#0000ff"/><rect x="5" y="13" width="1" height="1" fill="#0000ff"/><rect x="8" y="13" width="1" height="1" fill="#0000ff"/><rect x="6" y="14" width="2" height="1" fill="#0000ff"/></svg>
<svg style="left:252px;top:247px" width="16" height="15" viewBox="0 0 16 15" shape-rendering="crispEdges"><rect x="6" y="0" width="2" height="1" fill="#0000ff"/><rect x="5" y="1" width="1" height="1" fill="#0000ff"/><rect x="8" y="1" width="1" height="1" fill="#0000ff"/><rect x="5" y="2" width="1" height="1" fill="#0000ff"/><rect x="8" y="2" width="1" height="1" fill="#0000ff"/><rect x="5" y="3" width="1" height="1" fill="#0000ff"/><rect x="8" y="3" width="1" height="1" fill="#0000ff"/><rect x="4" y="4" width="1" height="1" fill="#0000ff"/><rect x="9" y="4" width="1" height="1" fill="#0000ff"/><rect x="4" y="5" width="1" height="1" fill="#0000ff"/><rect x="13" y="5" width="1" height="1" fill="#000"/><rect x="4" y="6" width="1" height="1" fill="#0000ff"/><rect x="13" y="6" width="2" height="1" fill="#000"/><rect x="0" y="7" width="16" height="1" fill="#000"/><rect x="4" y="8" width="1" height="1" fill="#0000ff"/><rect x="13" y="8" width="2" height="1" fill="#000"/><rect x="4" y="9" width="1" height="1" fill="#0000ff"/><rect x="9" y="9" width="1" height="1" fill="#0000ff"/><rect x="13" y="9" width="1" height="1" fill="#000"/><rect x="4" y="10" width="1" height="1" fill="#0000ff"/><rect x="8" y="10" width="2" height="1" fill="#0000ff"/><rect x="5" y="11" width="1" height="1" fill="#0000ff"/><rect x="7" y="11" width="3" height="1" fill="#0000ff"/><rect x="5" y="12" width="1" height="1" fill="#0000ff"/><rect x="7" y="12" width="3" height="1" fill="#0000ff"/><rect x="5" y="13" width="1" height="1" fill="#0000ff"/><rect x="8" y="13" width="1" height="1" fill="#0000ff"/><rect x="6" y="14" width="2" height="1" fill="#0000ff"/></svg>
<svg style="left:276px;top:246px" width="14" height="16" viewBox="0 0 14 16" shape-rendering="crispEdges"><rect x="7" y="0" width="3" height="1" fill="#000080"/><rect x="5" y="1" width="2" height="1" fill="#000080"/><rect x="10" y="1" width="2" height="1" fill="#000080"/><rect x="4" y="2" width="1" height="1" fill="#000080"/><rect x="12" y="2" width="1" height="1" fill="#000080"/><rect x="4" y="3" width="1" height="1" fill="#000080"/><rect x="6" y="3" width="2" height="1" fill="#c0c0c0"/><rect x="12" y="3" width="1" height="1" fill="#000080"/><rect x="3" y="4" width="1" height="1" fill="#000080"/><rect x="6" y="4" width="2" height="1" fill="#c0c0c0"/><rect x="13" y="4" width="1" height="1" fill="#000080"/><rect x="3" y="5" width="1" height="1" fill="#000080"/><rect x="13" y="5" width="1" height="1" fill="#000080"/><rect x="4" y="6" width="1" height="1" fill="#000080"/><rect x="12" y="6" width="1" height="1" fill="#000080"/><rect x="4" y="7" width="1" height="1" fill="#000080"/><rect x="12" y="7" width="1" height="1" fill="#000080"/><rect x="5" y="8" width="2" height="1" fill="#000080"/><rect x="10" y="8" width="2" height="1" fill="#000080"/><rect x="7" y="9" width="3" height="1" fill="#000080"/><rect x="2" y="10" width="2" height="1" fill="#800080"/><rect x="7" y="10" width="3" height="1" fill="#000080"/><rect x="2" y="11" width="2" height="1" fill="#800080"/><rect x="7" y="11" width="3" height="1" fill="#000080"/><rect x="0" y="12" width="6" height="1" fill="#800080"/><rect x="7" y="12" width="3" height="1" fill="#000080"/><rect x="0" y="13" width="6" height="1" fill="#800080"/><rect x="7" y="13" width="3" height="1" fill="#000080"/><rect x="2" y="14" width="2" height="1" fill="#800080"/><rect x="7" y="14" width="3" height="1" fill="#000080"/><rect x="2" y="15" width="2" height="1" fill="#800080"/><rect x="7" y="15" width="3" height="1" fill="#000080"/></svg>
<svg style="left:300px;top:246px" width="14" height="16" viewBox="0 0 14 16" shape-rendering="crispEdges"><rect x="7" y="0" width="3" height="1" fill="#000080"/><rect x="5" y="1" width="2" height="1" fill="#000080"/><rect x="10" y="1" width="2" height="1" fill="#000080"/><rect x="4" y="2" width="1" height="1" fill="#000080"/><rect x="12" y="2" width="1" height="1" fill="#000080"/><rect x="4" y="3" width="1" height="1" fill="#000080"/><rect x="6" y="3" width="2" height="1" fill="#c0c0c0"/><rect x="12" y="3" width="1" height="1" fill="#000080"/><rect x="3" y="4" width="1" height="1" fill="#000080"/><rect x="6" y="4" width="2" height="1" fill="#c0c0c0"/><rect x="13" y="4" width="1" height="1" fill="#000080"/><rect x="3" y="5" width="1" height="1" fill="#000080"/><rect x="13" y="5" width="1" height="1" fill="#000080"/><rect x="4" y="6" width="1" height="1" fill="#000080"/><rect x="12" y="6" width="1" height="1" fill="#000080"/><rect x="4" y="7" width="1" height="1" fill="#000080"/><rect x="12" y="7" width="1" height="1" fill="#000080"/><rect x="5" y="8" width="2" height="1" fill="#000080"/><rect x="10" y="8" width="2" height="1" fill="#000080"/><rect x="7" y="9" width="3" height="1" fill="#000080"/><rect x="7" y="10" width="3" height="1" fill="#000080"/><rect x="7" y="11" width="3" height="1" fill="#000080"/><rect x="0" y="12" width="6" height="1" fill="#800080"/><rect x="7" y="12" width="3" height="1" fill="#000080"/><rect x="0" y="13" width="6" height="1" fill="#800080"/><rect x="7" y="13" width="3" height="1" fill="#000080"/><rect x="7" y="14" width="3" height="1" fill="#000080"/><rect x="7" y="15" width="3" height="1" fill="#000080"/></svg>
<svg style="left:324px;top:246px" width="16" height="15" viewBox="0 0 16 15" shape-rendering="crispEdges"><rect x="4" y="0" width="1" height="1" fill="#000080"/><rect x="3" y="1" width="3" height="1" fill="#000080"/><rect x="4" y="2" width="1" height="1" fill="#000080"/><rect x="4" y="3" width="1" height="1" fill="#000080"/><rect x="4" y="4" width="1" height="1" fill="#000080"/><rect x="4" y="5" width="1" height="1" fill="#000080"/><rect x="4" y="6" width="1" height="1" fill="#000080"/><rect x="4" y="7" width="1" height="1" fill="#000080"/><rect x="14" y="7" width="1" height="1" fill="#000080"/><rect x="4" y="8" width="12" height="1" fill="#000080"/><rect x="3" y="9" width="1" height="1" fill="#000080"/><rect x="14" y="9" width="1" height="1" fill="#000080"/><rect x="0" y="10" width="1" height="1" fill="#000080"/><rect x="2" y="10" width="1" height="1" fill="#000080"/><rect x="8" y="10" width="1" height="1" fill="#800080"/><rect x="0" y="11" width="2" height="1" fill="#000080"/><rect x="7" y="11" width="8" height="1" fill="#800080"/><rect x="0" y="12" width="2" height="1" fill="#000080"/><rect x="6" y="12" width="9" height="1" fill="#800080"/><rect x="7" y="13" width="8" height="1" fill="#800080"/><rect x="8" y="14" width="1" height="1" fill="#800080"/></svg>
<svg style="left:348px;top:246px" width="16" height="15" viewBox="0 0 16 15" shape-rendering="crispEdges"><rect x="4" y="0" width="1" height="1" fill="#000080"/><rect x="3" y="1" width="3" height="1" fill="#000080"/><rect x="4" y="2" width="1" height="1" fill="#000080"/><rect x="4" y="3" width="1" height="1" fill="#000080"/><rect x="4" y="4" width="1" height="1" fill="#000080"/><rect x="4" y="5" width="1" height="1" fill="#000080"/><rect x="4" y="6" width="1" height="1" fill="#000080"/><rect x="4" y="7" width="1" height="1" fill="#000080"/><rect x="14" y="7" width="1" height="1" fill="#000080"/><rect x="4" y="8" width="12" height="1" fill="#000080"/><rect x="3" y="9" width="1" height="1" fill="#000080"/><rect x="14" y="9" width="1" height="1" fill="#000080"/><rect x="0" y="10" width="1" height="1" fill="#000080"/><rect x="2" y="10" width="1" height="1" fill="#000080"/><rect x="12" y="10" width="1" height="1" fill="#800080"/><rect x="0" y="11" width="2" height="1" fill="#000080"/><rect x="6" y="11" width="8" height="1" fill="#800080"/><rect x="0" y="12" width="2" height="1" fill="#000080"/><rect x="6" y="12" width="9" height="1" fill="#800080"/><rect x="6" y="13" width="8" height="1" fill="#800080"/><rect x="12" y="14" width="1" height="1" fill="#800080"/></svg>
<svg style="left:372px;top:246px" width="16" height="15" viewBox="0 0 16 15" shape-rendering="crispEdges"><rect x="11" y="0" width="1" height="1" fill="#800080"/><rect x="10" y="1" width="3" height="1" fill="#800080"/><rect x="4" y="2" width="1" height="1" fill="#000080"/><rect x="9" y="2" width="5" height="1" fill="#800080"/><rect x="3" y="3" width="3" height="1" fill="#000080"/><rect x="10" y="3" width="3" height="1" fill="#800080"/><rect x="4" y="4" width="1" height="1" fill="#000080"/><rect x="10" y="4" width="3" height="1" fill="#800080"/><rect x="4" y="5" width="1" height="1" fill="#000080"/><rect x="10" y="5" width="3" height="1" fill="#800080"/><rect x="4" y="6" width="1" height="1" fill="#000080"/><rect x="10" y="6" width="3" height="1" fill="#800080"/><rect x="4" y="7" width="1" height="1" fill="#000080"/><rect x="10" y="7" width="3" height="1" fill="#800080"/><rect x="4" y="8" width="1" height="1" fill="#000080"/><rect x="10" y="8" width="3" height="1" fill="#800080"/><rect x="4" y="9" width="1" height="1" fill="#000080"/><rect x="14" y="9" width="1" height="1" fill="#000080"/><rect x="4" y="10" width="12" height="1" fill="#000080"/><rect x="3" y="11" width="1" height="1" fill="#000080"/><rect x="14" y="11" width="1" height="1" fill="#000080"/><rect x="0" y="12" width="1" height="1" fill="#000080"/><rect x="2" y="12" width="1" height="1" fill="#000080"/><rect x="0" y="13" width="2" height="1" fill="#000080"/><rect x="0" y="14" width="2" height="1" fill="#000080"/></svg>
<svg style="left:396px;top:246px" width="16" height="15" viewBox="0 0 16 15" shape-rendering="crispEdges"><rect x="10" y="0" width="3" height="1" fill="#800080"/><rect x="10" y="1" width="3" height="1" fill="#800080"/><rect x="4" y="2" width="1" height="1" fill="#000080"/><rect x="10" y="2" width="3" height="1" fill="#800080"/><rect x="3" y="3" width="3" height="1" fill="#000080"/><rect x="10" y="3" width="3" height="1" fill="#800080"/><rect x="4" y="4" width="1" height="1" fill="#000080"/><rect x="10" y="4" width="3" height="1" fill="#800080"/><rect x="4" y="5" width="1" height="1" fill="#000080"/><rect x="10" y="5" width="3" height="1" fill="#800080"/><rect x="4" y="6" width="1" height="1" fill="#000080"/><rect x="9" y="6" width="5" height="1" fill="#800080"/><rect x="4" y="7" width="1" height="1" fill="#000080"/><rect x="10" y="7" width="3" height="1" fill="#800080"/><rect x="4" y="8" width="1" height="1" fill="#000080"/><rect x="11" y="8" width="1" height="1" fill="#800080"/><rect x="4" y="9" width="1" height="1" fill="#000080"/><rect x="14" y="9" width="1" height="1" fill="#000080"/><rect x="4" y="10" width="12" height="1" fill="#000080"/><rect x="3" y="11" width="1" height="1" fill="#000080"/><rect x="14" y="11" width="1" height="1" fill="#000080"/><rect x="0" y="12" width="1" height="1" fill="#000080"/><rect x="2" y="12" width="1" height="1" fill="#000080"/><rect x="0" y="13" width="2" height="1" fill="#000080"/><rect x="0" y="14" width="2" height="1" fill="#000080"/></svg>
<svg style="left:424px;top:247px" width="15" height="15" viewBox="0 0 15 15" shape-rendering="crispEdges"><rect x="3" y="0" width="12" height="1" fill="#0000ff"/><rect x="2" y="1" width="1" height="1" fill="#0000ff"/><rect x="3" y="1" width="1" height="1" fill="#808080"/><rect x="13" y="1" width="2" height="1" fill="#0000ff"/><rect x="1" y="2" width="1" height="1" fill="#0000ff"/><rect x="3" y="2" width="1" height="1" fill="#808080"/><rect x="12" y="2" width="1" height="1" fill="#0000ff"/><rect x="14" y="2" width="1" height="1" fill="#0000ff"/><rect x="0" y="3" width="12" height="1" fill="#0000ff"/><rect x="14" y="3" width="1" height="1" fill="#0000ff"/><rect x="0" y="4" width="1" height="1" fill="#0000ff"/><rect x="3" y="4" width="1" height="1" fill="#808080"/><rect x="11" y="4" width="1" height="1" fill="#0000ff"/><rect x="14" y="4" width="1" height="1" fill="#0000ff"/><rect x="0" y="5" width="1" height="1" fill="#0000ff"/><rect x="3" y="5" width="1" height="1" fill="#808080"/><rect x="11" y="5" width="1" height="1" fill="#0000ff"/><rect x="14" y="5" width="1" height="1" fill="#0000ff"/><rect x="0" y="6" width="1" height="1" fill="#0000ff"/><rect x="3" y="6" width="1" height="1" fill="#808080"/><rect x="11" y="6" width="1" height="1" fill="#0000ff"/><rect x="14" y="6" width="1" height="1" fill="#0000ff"/><rect x="0" y="7" width="1" height="1" fill="#0000ff"/><rect x="3" y="7" width="1" height="1" fill="#808080"/><rect x="11" y="7" width="1" height="1" fill="#0000ff"/><rect x="14" y="7" width="1" height="1" fill="#0000ff"/><rect x="0" y="8" width="1" height="1" fill="#0000ff"/><rect x="3" y="8" width="1" height="1" fill="#808080"/><rect x="11" y="8" width="1" height="1" fill="#0000ff"/><rect x="14" y="8" width="1" height="1" fill="#0000ff"/><rect x="0" y="9" width="1" height="1" fill="#0000ff"/><rect x="3" y="9" width="1" height="1" fill="#808080"/><rect x="11" y="9" width="1" height="1" fill="#0000ff"/><rect x="14" y="9" width="1" height="1" fill="#0000ff"/><rect x="0" y="10" width="1" height="1" fill="#0000ff"/><rect x="3" y="10" width="1" height="1" fill="#808080"/><rect x="11" y="10" width="1" height="1" fill="#0000ff"/><rect x="14" y="10" width="1" height="1" fill="#0000ff"/><rect x="0" y="11" width="1" height="1" fill="#0000ff"/><rect x="3" y="11" width="8" height="1" fill="#808080"/><rect x="11" y="11" width="1" height="1" fill="#0000ff"/><rect x="12" y="11" width="2" height="1" fill="#808080"/><rect x="14" y="11" width="1" height="1" fill="#0000ff"/><rect x="0" y="12" width="1" height="1" fill="#0000ff"/><rect x="2" y="12" width="1" height="1" fill="#808080"/><rect x="11" y="12" width="1" height="1" fill="#0000ff"/><rect x="13" y="12" width="1" height="1" fill="#0000ff"/><rect x="0" y="13" width="1" height="1" fill="#0000ff"/><rect x="1" y="13" width="1" height="1" fill="#808080"/><rect x="11" y="13" width="2" height="1" fill="#0000ff"/><rect x="0" y="14" width="12" height="1" fill="#0000ff"/></svg>
<svg style="left:448px;top:247px" width="15" height="15" viewBox="0 0 15 15" shape-rendering="crispEdges"><rect x="7" y="0" width="8" height="1" fill="#0000ff"/><rect x="7" y="1" width="1" height="1" fill="#0000ff"/><rect x="14" y="1" width="1" height="1" fill="#0000ff"/><rect x="7" y="2" width="1" height="1" fill="#0000ff"/><rect x="14" y="2" width="1" height="1" fill="#0000ff"/><rect x="0" y="3" width="12" height="1" fill="#0000ff"/><rect x="14" y="3" width="1" height="1" fill="#0000ff"/><rect x="0" y="4" width="1" height="1" fill="#0000ff"/><rect x="7" y="4" width="1" height="1" fill="#808080"/><rect x="11" y="4" width="1" height="1" fill="#0000ff"/><rect x="14" y="4" width="1" height="1" fill="#0000ff"/><rect x="0" y="5" width="1" height="1" fill="#0000ff"/><rect x="7" y="5" width="1" height="1" fill="#808080"/><rect x="11" y="5" width="1" height="1" fill="#0000ff"/><rect x="14" y="5" width="1" height="1" fill="#0000ff"/><rect x="0" y="6" width="1" height="1" fill="#0000ff"/><rect x="7" y="6" width="1" height="1" fill="#808080"/><rect x="11" y="6" width="1" height="1" fill="#0000ff"/><rect x="14" y="6" width="1" height="1" fill="#0000ff"/><rect x="0" y="7" width="1" height="1" fill="#0000ff"/><rect x="7" y="7" width="4" height="1" fill="#808080"/><rect x="11" y="7" width="4" height="1" fill="#0000ff"/><rect x="0" y="8" width="1" height="1" fill="#0000ff"/><rect x="11" y="8" width="1" height="1" fill="#0000ff"/><rect x="0" y="9" width="1" height="1" fill="#0000ff"/><rect x="11" y="9" width="1" height="1" fill="#0000ff"/><rect x="0" y="10" width="1" height="1" fill="#0000ff"/><rect x="11" y="10" width="1" height="1" fill="#0000ff"/><rect x="0" y="11" width="1" height="1" fill="#0000ff"/><rect x="11" y="11" width="1" height="1" fill="#0000ff"/><rect x="0" y="12" width="1" height="1" fill="#0000ff"/><rect x="11" y="12" width="1" height="1" fill="#0000ff"/><rect x="0" y="13" width="1" height="1" fill="#0000ff"/><rect x="11" y="13" width="1" height="1" fill="#0000ff"/><rect x="0" y="14" width="12" height="1" fill="#0000ff"/></svg>
<span class="t" style="left:472.00px;top:248px;font-size:12px;line-height:14px;color:#0000ff;letter-spacing:-0.344px;font-weight:bold;">2D</span>
<svg style="left:497px;top:246px" width="16" height="15" viewBox="0 0 16 15" shape-rendering="crispEdges"><rect x="6" y="0" width="1" height="1" fill="#000"/><rect x="5" y="1" width="3" height="1" fill="#000"/><rect x="6" y="2" width="1" height="1" fill="#000080"/><rect x="4" y="3" width="2" height="1" fill="#000"/><rect x="6" y="3" width="1" height="1" fill="#000080"/><rect x="7" y="3" width="2" height="1" fill="#000"/><rect x="3" y="4" width="1" height="1" fill="#000"/><rect x="6" y="4" width="1" height="1" fill="#000080"/><rect x="9" y="4" width="1" height="1" fill="#000"/><rect x="2" y="5" width="1" height="1" fill="#000"/><rect x="6" y="5" width="1" height="1" fill="#000080"/><rect x="10" y="5" width="1" height="1" fill="#000"/><rect x="2" y="6" width="1" height="1" fill="#000"/><rect x="6" y="6" width="1" height="1" fill="#000080"/><rect x="10" y="6" width="1" height="1" fill="#000"/><rect x="2" y="7" width="1" height="1" fill="#000"/><rect x="6" y="7" width="1" height="1" fill="#000080"/><rect x="10" y="7" width="1" height="1" fill="#000"/><rect x="14" y="7" width="1" height="1" fill="#000"/><rect x="2" y="8" width="1" height="1" fill="#000"/><rect x="6" y="8" width="8" height="1" fill="#000080"/><rect x="14" y="8" width="2" height="1" fill="#000"/><rect x="2" y="9" width="1" height="1" fill="#000"/><rect x="5" y="9" width="1" height="1" fill="#000080"/><rect x="10" y="9" width="1" height="1" fill="#000"/><rect x="14" y="9" width="1" height="1" fill="#000"/><rect x="2" y="10" width="1" height="1" fill="#000"/><rect x="4" y="10" width="1" height="1" fill="#000080"/><rect x="10" y="10" width="1" height="1" fill="#000"/><rect x="3" y="11" width="1" height="1" fill="#000080"/><rect x="9" y="11" width="1" height="1" fill="#000"/><rect x="0" y="12" width="1" height="1" fill="#000"/><rect x="2" y="12" width="1" height="1" fill="#000080"/><rect x="4" y="12" width="5" height="1" fill="#000"/><rect x="0" y="13" width="2" height="1" fill="#000"/><rect x="0" y="14" width="3" height="1" fill="#000"/></svg>
<div style="left:516px;top:244px;width:15px;height:20px;border:1px solid #b4b4b4;border-left:none;border-radius:0 4px 4px 0;background:linear-gradient(#f6f6f6 0%,#f2f2f2 48%,#e8e8e8 52%,#ececec 100%);"></div>
<svg style="left:520px;top:252px" width="8" height="5" viewBox="0 0 8 5"><path d="M0 0 L7.4 0 L3.7 4 Z" fill="#111"/></svg>
<svg style="left:541px;top:247px" width="11" height="15" viewBox="0 0 11 15" shape-rendering="crispEdges"><rect x="5" y="0" width="1" height="1" fill="#000"/><rect x="7" y="0" width="1" height="1" fill="#000"/><rect x="3" y="1" width="2" height="1" fill="#000"/><rect x="5" y="1" width="1" height="1" fill="#fff"/><rect x="6" y="1" width="1" height="1" fill="#000"/><rect x="7" y="1" width="1" height="1" fill="#fff"/><rect x="8" y="1" width="1" height="1" fill="#000"/><rect x="2" y="2" width="1" height="1" fill="#000"/><rect x="3" y="2" width="1" height="1" fill="#fff"/><rect x="4" y="2" width="1" height="1" fill="#000"/><rect x="5" y="2" width="1" height="1" fill="#fff"/><rect x="6" y="2" width="1" height="1" fill="#000"/><rect x="7" y="2" width="1" height="1" fill="#fff"/><rect x="8" y="2" width="2" height="1" fill="#000"/><rect x="2" y="3" width="1" height="1" fill="#000"/><rect x="3" y="3" width="1" height="1" fill="#fff"/><rect x="4" y="3" width="1" height="1" fill="#000"/><rect x="5" y="3" width="1" height="1" fill="#fff"/><rect x="6" y="3" width="1" height="1" fill="#000"/><rect x="7" y="3" width="1" height="1" fill="#fff"/><rect x="8" y="3" width="1" height="1" fill="#000"/><rect x="9" y="3" width="1" height="1" fill="#fff"/><rect x="10" y="3" width="1" height="1" fill="#000"/><rect x="1" y="4" width="2" height="1" fill="#000"/><rect x="3" y="4" width="1" height="1" fill="#fff"/><rect x="4" y="4" width="1" height="1" fill="#000"/><rect x="5" y="4" width="1" height="1" fill="#fff"/><rect x="6" y="4" width="1" height="1" fill="#000"/><rect x="7" y="4" width="1" height="1" fill="#fff"/><rect x="8" y="4" width="1" height="1" fill="#000"/><rect x="9" y="4" width="1" height="1" fill="#fff"/><rect x="10" y="4" width="1" height="1" fill="#000"/><rect x="0" y="5" width="1" height="1" fill="#000"/><rect x="1" y="5" width="1" height="1" fill="#fff"/><rect x="2" y="5" width="1" height="1" fill="#000"/><rect x="3" y="5" width="1" height="1" fill="#fff"/><rect x="4" y="5" width="1" height="1" fill="#000"/><rect x="5" y="5" width="1" height="1" fill="#fff"/><rect x="6" y="5" width="1" height="1" fill="#000"/><rect x="7" y="5" width="1" height="1" fill="#fff"/><rect x="8" y="5" width="1" height="1" fill="#000"/><rect x="9" y="5" width="1" height="1" fill="#fff"/><rect x="10" y="5" width="1" height="1" fill="#000"/><rect x="0" y="6" width="1" height="1" fill="#000"/><rect x="1" y="6" width="1" height="1" fill="#fff"/><rect x="2" y="6" width="1" height="1" fill="#000"/><rect x="3" y="6" width="1" height="1" fill="#fff"/><rect x="4" y="6" width="1" height="1" fill="#000"/><rect x="5" y="6" width="1" height="1" fill="#fff"/><rect x="6" y="6" width="1" height="1" fill="#000"/><rect x="7" y="6" width="1" height="1" fill="#fff"/><rect x="8" y="6" width="1" height="1" fill="#000"/><rect x="9" y="6" width="1" height="1" fill="#fff"/><rect x="10" y="6" width="1" height="1" fill="#000"/><rect x="0" y="7" width="1" height="1" fill="#000"/><rect x="1" y="7" width="1" height="1" fill="#fff"/><rect x="2" y="7" width="1" height="1" fill="#000"/><rect x="3" y="7" width="7" height="1" fill="#fff"/><rect x="10" y="7" width="1" height="1" fill="#000"/><rect x="0" y="8" width="1" height="1" fill="#000"/><rect x="1" y="8" width="1" height="1" fill="#fff"/><rect x="2" y="8" width="1" height="1" fill="#000"/><rect x="3" y="8" width="7" height="1" fill="#fff"/><rect x="10" y="8" width="1" height="1" fill="#000"/><rect x="0" y="9" width="1" height="1" fill="#000"/><rect x="1" y="9" width="9" height="1" fill="#fff"/><rect x="10" y="9" width="1" height="1" fill="#000"/><rect x="0" y="10" width="1" height="1" fill="#000"/><rect x="1" y="10" width="9" height="1" fill="#fff"/><rect x="10" y="10" width="1" height="1" fill="#000"/><rect x="1" y="11" width="1" height="1" fill="#000"/><rect x="2" y="11" width="8" height="1" fill="#fff"/><rect x="10" y="11" width="1" height="1" fill="#000"/><rect x="2" y="12" width="1" height="1" fill="#000"/><rect x="3" y="12" width="6" height="1" fill="#fff"/><rect x="9" y="12" width="1" height="1" fill="#000"/><rect x="2" y="13" width="1" height="1" fill="#000"/><rect x="3" y="13" width="6" height="1" fill="#fff"/><rect x="9" y="13" width="1" height="1" fill="#000"/><rect x="2" y="14" width="8" height="1" fill="#000"/></svg>
<svg style="left:564px;top:246px" width="15" height="16" viewBox="0 0 15 16" shape-rendering="crispEdges"><rect x="12" y="0" width="1" height="1" fill="#800080"/><rect x="3" y="1" width="3" height="1" fill="#0000ff"/><rect x="12" y="1" width="1" height="1" fill="#800080"/><rect x="1" y="2" width="2" height="1" fill="#0000ff"/><rect x="3" y="2" width="3" height="1" fill="#c0c0c0"/><rect x="6" y="2" width="2" height="1" fill="#0000ff"/><rect x="10" y="2" width="5" height="1" fill="#800080"/><rect x="1" y="3" width="1" height="1" fill="#0000ff"/><rect x="2" y="3" width="2" height="1" fill="#fff"/><rect x="4" y="3" width="3" height="1" fill="#c0c0c0"/><rect x="7" y="3" width="1" height="1" fill="#0000ff"/><rect x="12" y="3" width="1" height="1" fill="#800080"/><rect x="0" y="4" width="1" height="1" fill="#0000ff"/><rect x="1" y="4" width="1" height="1" fill="#c0c0c0"/><rect x="2" y="4" width="2" height="1" fill="#fff"/><rect x="4" y="4" width="4" height="1" fill="#c0c0c0"/><rect x="8" y="4" width="1" height="1" fill="#0000ff"/><rect x="12" y="4" width="1" height="1" fill="#800080"/><rect x="0" y="5" width="1" height="1" fill="#0000ff"/><rect x="1" y="5" width="7" height="1" fill="#c0c0c0"/><rect x="8" y="5" width="1" height="1" fill="#0000ff"/><rect x="0" y="6" width="1" height="1" fill="#0000ff"/><rect x="1" y="6" width="7" height="1" fill="#c0c0c0"/><rect x="8" y="6" width="1" height="1" fill="#0000ff"/><rect x="1" y="7" width="1" height="1" fill="#0000ff"/><rect x="2" y="7" width="5" height="1" fill="#c0c0c0"/><rect x="7" y="7" width="1" height="1" fill="#0000ff"/><rect x="10" y="7" width="5" height="1" fill="#800080"/><rect x="1" y="8" width="2" height="1" fill="#0000ff"/><rect x="3" y="8" width="3" height="1" fill="#c0c0c0"/><rect x="6" y="8" width="2" height="1" fill="#0000ff"/><rect x="8" y="8" width="1" height="1" fill="#000"/><rect x="3" y="9" width="3" height="1" fill="#0000ff"/><rect x="8" y="9" width="2" height="1" fill="#000"/><rect x="3" y="10" width="1" height="1" fill="#ff00ff"/><rect x="4" y="10" width="1" height="1" fill="#c000c0"/><rect x="5" y="10" width="1" height="1" fill="#800080"/><rect x="8" y="10" width="1" height="1" fill="#000"/><rect x="9" y="10" width="1" height="1" fill="#fff"/><rect x="10" y="10" width="1" height="1" fill="#000"/><rect x="3" y="11" width="1" height="1" fill="#ff00ff"/><rect x="4" y="11" width="1" height="1" fill="#c000c0"/><rect x="5" y="11" width="1" height="1" fill="#800080"/><rect x="8" y="11" width="1" height="1" fill="#000"/><rect x="9" y="11" width="2" height="1" fill="#fff"/><rect x="11" y="11" width="1" height="1" fill="#000"/><rect x="3" y="12" width="1" height="1" fill="#ff00ff"/><rect x="4" y="12" width="1" height="1" fill="#c000c0"/><rect x="5" y="12" width="1" height="1" fill="#800080"/><rect x="8" y="12" width="1" height="1" fill="#000"/><rect x="9" y="12" width="3" height="1" fill="#fff"/><rect x="12" y="12" width="1" height="1" fill="#000"/><rect x="3" y="13" width="1" height="1" fill="#ff00ff"/><rect x="4" y="13" width="1" height="1" fill="#c000c0"/><rect x="5" y="13" width="1" height="1" fill="#800080"/><rect x="8" y="13" width="1" height="1" fill="#000"/><rect x="9" y="13" width="3" height="1" fill="#fff"/><rect x="12" y="13" width="2" height="1" fill="#000"/><rect x="3" y="14" width="1" height="1" fill="#ff00ff"/><rect x="4" y="14" width="1" height="1" fill="#c000c0"/><rect x="5" y="14" width="1" height="1" fill="#800080"/><rect x="8" y="14" width="2" height="1" fill="#000"/><rect x="10" y="14" width="1" height="1" fill="#fff"/><rect x="11" y="14" width="2" height="1" fill="#000"/><rect x="3" y="15" width="1" height="1" fill="#ff00ff"/><rect x="4" y="15" width="1" height="1" fill="#c000c0"/><rect x="5" y="15" width="1" height="1" fill="#800080"/><rect x="10" y="15" width="1" height="1" fill="#000"/><rect x="12" y="15" width="1" height="1" fill="#000"/></svg>
<svg style="left:587px;top:246px" width="16" height="16" viewBox="0 0 16 16" shape-rendering="crispEdges"><rect x="7" y="0" width="1" height="1" fill="#000080"/><rect x="6" y="1" width="3" height="1" fill="#000080"/><rect x="7" y="2" width="1" height="1" fill="#000080"/><rect x="7" y="3" width="1" height="1" fill="#000080"/><rect x="7" y="4" width="1" height="1" fill="#000080"/><rect x="7" y="5" width="1" height="1" fill="#000080"/><rect x="1" y="6" width="1" height="1" fill="#000080"/><rect x="7" y="6" width="1" height="1" fill="#000080"/><rect x="13" y="6" width="1" height="1" fill="#000080"/><rect x="0" y="7" width="7" height="1" fill="#000080"/><rect x="7" y="7" width="1" height="1" fill="#808080"/><rect x="8" y="7" width="2" height="1" fill="#000080"/><rect x="10" y="7" width="1" height="1" fill="#000"/><rect x="11" y="7" width="4" height="1" fill="#000080"/><rect x="1" y="8" width="1" height="1" fill="#000080"/><rect x="7" y="8" width="1" height="1" fill="#000080"/><rect x="10" y="8" width="2" height="1" fill="#000"/><rect x="13" y="8" width="1" height="1" fill="#000080"/><rect x="7" y="9" width="1" height="1" fill="#000080"/><rect x="10" y="9" width="1" height="1" fill="#000"/><rect x="11" y="9" width="1" height="1" fill="#c0c0c0"/><rect x="12" y="9" width="1" height="1" fill="#000"/><rect x="7" y="10" width="1" height="1" fill="#000080"/><rect x="10" y="10" width="1" height="1" fill="#000"/><rect x="11" y="10" width="2" height="1" fill="#c0c0c0"/><rect x="13" y="10" width="1" height="1" fill="#000"/><rect x="7" y="11" width="1" height="1" fill="#000080"/><rect x="10" y="11" width="1" height="1" fill="#000"/><rect x="11" y="11" width="3" height="1" fill="#c0c0c0"/><rect x="14" y="11" width="1" height="1" fill="#000"/><rect x="7" y="12" width="1" height="1" fill="#000080"/><rect x="10" y="12" width="1" height="1" fill="#000"/><rect x="11" y="12" width="2" height="1" fill="#c0c0c0"/><rect x="13" y="12" width="3" height="1" fill="#000"/><rect x="6" y="13" width="3" height="1" fill="#000080"/><rect x="10" y="13" width="3" height="1" fill="#000"/><rect x="13" y="13" width="1" height="1" fill="#c0c0c0"/><rect x="14" y="13" width="1" height="1" fill="#000"/><rect x="7" y="14" width="1" height="1" fill="#000080"/><rect x="12" y="14" width="1" height="1" fill="#000"/><rect x="13" y="14" width="1" height="1" fill="#c0c0c0"/><rect x="14" y="14" width="1" height="1" fill="#000"/><rect x="12" y="15" width="1" height="1" fill="#000"/><rect x="14" y="15" width="1" height="1" fill="#000"/></svg>
<svg style="left:612px;top:246px" width="14" height="15" viewBox="0 0 14 15" shape-rendering="crispEdges"><rect x="3" y="0" width="1" height="1" fill="#ff0000"/><rect x="3" y="1" width="1" height="1" fill="#ff0000"/><rect x="0" y="2" width="2" height="1" fill="#000"/><rect x="12" y="2" width="2" height="1" fill="#ff0000"/><rect x="0" y="3" width="1" height="1" fill="#000"/><rect x="2" y="3" width="2" height="1" fill="#000"/><rect x="9" y="3" width="3" height="1" fill="#ff0000"/><rect x="1" y="4" width="1" height="1" fill="#000"/><rect x="4" y="4" width="1" height="1" fill="#ff0000"/><rect x="5" y="4" width="1" height="1" fill="#000"/><rect x="7" y="4" width="2" height="1" fill="#ff0000"/><rect x="1" y="5" width="1" height="1" fill="#000"/><rect x="4" y="5" width="1" height="1" fill="#ff0000"/><rect x="6" y="5" width="2" height="1" fill="#ff0000"/><rect x="2" y="6" width="1" height="1" fill="#000"/><rect x="4" y="6" width="3" height="1" fill="#ff0000"/><rect x="8" y="6" width="2" height="1" fill="#000"/><rect x="2" y="7" width="1" height="1" fill="#000"/><rect x="4" y="7" width="2" height="1" fill="#ff0000"/><rect x="8" y="7" width="1" height="1" fill="#000"/><rect x="2" y="8" width="1" height="1" fill="#000"/><rect x="3" y="8" width="3" height="1" fill="#ff0000"/><rect x="7" y="8" width="1" height="1" fill="#000"/><rect x="2" y="9" width="1" height="1" fill="#ff0000"/><rect x="5" y="9" width="1" height="1" fill="#ff0000"/><rect x="7" y="9" width="1" height="1" fill="#c0c0c0"/><rect x="8" y="9" width="1" height="1" fill="#000"/><rect x="1" y="10" width="1" height="1" fill="#ff0000"/><rect x="3" y="10" width="1" height="1" fill="#000"/><rect x="5" y="10" width="1" height="1" fill="#ff0000"/><rect x="7" y="10" width="2" height="1" fill="#c0c0c0"/><rect x="9" y="10" width="1" height="1" fill="#000"/><rect x="1" y="11" width="1" height="1" fill="#ff0000"/><rect x="4" y="11" width="1" height="1" fill="#000"/><rect x="5" y="11" width="1" height="1" fill="#ff0000"/><rect x="6" y="11" width="1" height="1" fill="#000"/><rect x="7" y="11" width="3" height="1" fill="#c0c0c0"/><rect x="10" y="11" width="1" height="1" fill="#000"/><rect x="0" y="12" width="1" height="1" fill="#ff0000"/><rect x="5" y="12" width="1" height="1" fill="#ff0000"/><rect x="7" y="12" width="1" height="1" fill="#000"/><rect x="8" y="12" width="1" height="1" fill="#c0c0c0"/><rect x="9" y="12" width="1" height="1" fill="#000"/><rect x="0" y="13" width="1" height="1" fill="#ff0000"/><rect x="5" y="13" width="1" height="1" fill="#ff0000"/><rect x="8" y="13" width="1" height="1" fill="#000"/><rect x="5" y="14" width="1" height="1" fill="#ff0000"/></svg>
<svg style="left:639px;top:247px" width="16" height="14" viewBox="0 0 16 14" shape-rendering="crispEdges"><rect x="2" y="0" width="2" height="1" fill="#808080"/><rect x="1" y="1" width="3" height="1" fill="#fff"/><rect x="4" y="1" width="1" height="1" fill="#808080"/><rect x="0" y="2" width="1" height="1" fill="#000"/><rect x="1" y="2" width="4" height="1" fill="#fff"/><rect x="5" y="2" width="1" height="1" fill="#808080"/><rect x="1" y="3" width="1" height="1" fill="#000"/><rect x="2" y="3" width="4" height="1" fill="#fff"/><rect x="6" y="3" width="1" height="1" fill="#000080"/><rect x="2" y="4" width="1" height="1" fill="#000"/><rect x="3" y="4" width="3" height="1" fill="#fff"/><rect x="6" y="4" width="1" height="1" fill="#c0c0c0"/><rect x="8" y="4" width="5" height="1" fill="#808080"/><rect x="3" y="5" width="1" height="1" fill="#000"/><rect x="4" y="5" width="1" height="1" fill="#000080"/><rect x="5" y="5" width="3" height="1" fill="#fff"/><rect x="9" y="5" width="4" height="1" fill="#ffff00"/><rect x="4" y="6" width="1" height="1" fill="#000"/><rect x="5" y="6" width="1" height="1" fill="#c0c0c0"/><rect x="6" y="6" width="2" height="1" fill="#808080"/><rect x="8" y="6" width="5" height="1" fill="#ffff00"/><rect x="4" y="7" width="1" height="1" fill="#000"/><rect x="5" y="7" width="1" height="1" fill="#000080"/><rect x="7" y="7" width="2" height="1" fill="#ffff00"/><rect x="9" y="7" width="1" height="1" fill="#808080"/><rect x="10" y="7" width="2" height="1" fill="#ffff00"/><rect x="5" y="8" width="1" height="1" fill="#000080"/><rect x="7" y="8" width="3" height="1" fill="#ffff00"/><rect x="10" y="8" width="1" height="1" fill="#808080"/><rect x="5" y="9" width="1" height="1" fill="#000080"/><rect x="7" y="9" width="3" height="1" fill="#ffff00"/><rect x="11" y="9" width="1" height="1" fill="#808080"/><rect x="5" y="10" width="1" height="1" fill="#000"/><rect x="7" y="10" width="2" height="1" fill="#ffff00"/><rect x="12" y="10" width="1" height="1" fill="#808080"/><rect x="5" y="11" width="1" height="1" fill="#000"/><rect x="13" y="11" width="1" height="1" fill="#808080"/><rect x="13" y="12" width="2" height="1" fill="#808080"/><rect x="14" y="13" width="2" height="1" fill="#000"/></svg>
<div style="left:658px;top:244px;width:15px;height:20px;border:1px solid #b4b4b4;border-left:none;border-radius:0 4px 4px 0;background:linear-gradient(#f6f6f6 0%,#f2f2f2 48%,#e8e8e8 52%,#ececec 100%);"></div>
<svg style="left:662px;top:252px" width="8" height="5" viewBox="0 0 8 5"><path d="M0 0 L7.4 0 L3.7 4 Z" fill="#111"/></svg>
<div style="left:679px;top:247px;width:15px;height:15px;border:1px solid #8c7474;border-radius:1.5px;opacity:.8;"></div>
<svg style="left:680px;top:248px" width="13" height="13" viewBox="0 0 13 13" shape-rendering="crispEdges"><rect x="0" y="0" width="3" height="1" fill="#00ffff"/><rect x="3" y="0" width="1" height="1" fill="#000"/><rect x="4" y="0" width="5" height="1" fill="#00ffff"/><rect x="9" y="0" width="2" height="1" fill="#000"/><rect x="11" y="0" width="2" height="1" fill="#00ffff"/><rect x="0" y="1" width="2" height="1" fill="#00ffff"/><rect x="2" y="1" width="1" height="1" fill="#000"/><rect x="3" y="1" width="1" height="1" fill="#00ff00"/><rect x="4" y="1" width="1" height="1" fill="#000"/><rect x="5" y="1" width="3" height="1" fill="#00ffff"/><rect x="8" y="1" width="1" height="1" fill="#000"/><rect x="9" y="1" width="2" height="1" fill="#ffff00"/><rect x="11" y="1" width="1" height="1" fill="#000"/><rect x="12" y="1" width="1" height="1" fill="#00ffff"/><rect x="0" y="2" width="1" height="1" fill="#00ffff"/><rect x="1" y="2" width="2" height="1" fill="#000"/><rect x="3" y="2" width="1" height="1" fill="#00ff00"/><rect x="4" y="2" width="1" height="1" fill="#000"/><rect x="5" y="2" width="3" height="1" fill="#00ffff"/><rect x="8" y="2" width="1" height="1" fill="#000"/><rect x="9" y="2" width="2" height="1" fill="#ffff00"/><rect x="11" y="2" width="1" height="1" fill="#000"/><rect x="12" y="2" width="1" height="1" fill="#00ffff"/><rect x="0" y="3" width="1" height="1" fill="#000"/><rect x="1" y="3" width="1" height="1" fill="#00ff00"/><rect x="2" y="3" width="1" height="1" fill="#000"/><rect x="3" y="3" width="1" height="1" fill="#00ff00"/><rect x="4" y="3" width="3" height="1" fill="#000"/><rect x="7" y="3" width="2" height="1" fill="#00ffff"/><rect x="9" y="3" width="2" height="1" fill="#000"/><rect x="11" y="3" width="2" height="1" fill="#00ffff"/><rect x="0" y="4" width="1" height="1" fill="#000"/><rect x="1" y="4" width="1" height="1" fill="#00ff00"/><rect x="2" y="4" width="1" height="1" fill="#000"/><rect x="3" y="4" width="1" height="1" fill="#00ff00"/><rect x="4" y="4" width="2" height="1" fill="#000"/><rect x="6" y="4" width="1" height="1" fill="#00ff00"/><rect x="7" y="4" width="1" height="1" fill="#000"/><rect x="8" y="4" width="5" height="1" fill="#00ffff"/><rect x="0" y="5" width="1" height="1" fill="#00ffff"/><rect x="1" y="5" width="1" height="1" fill="#000"/><rect x="2" y="5" width="2" height="1" fill="#00ff00"/><rect x="4" y="5" width="2" height="1" fill="#000"/><rect x="6" y="5" width="1" height="1" fill="#00ff00"/><rect x="7" y="5" width="1" height="1" fill="#000"/><rect x="8" y="5" width="5" height="1" fill="#00ffff"/><rect x="0" y="6" width="3" height="1" fill="#000"/><rect x="3" y="6" width="1" height="1" fill="#00ff00"/><rect x="4" y="6" width="1" height="1" fill="#000"/><rect x="5" y="6" width="1" height="1" fill="#00ff00"/><rect x="6" y="6" width="7" height="1" fill="#000"/><rect x="0" y="7" width="2" height="1" fill="#008000"/><rect x="2" y="7" width="1" height="1" fill="#000"/><rect x="3" y="7" width="2" height="1" fill="#00ff00"/><rect x="5" y="7" width="1" height="1" fill="#000"/><rect x="6" y="7" width="7" height="1" fill="#008000"/><rect x="0" y="8" width="2" height="1" fill="#008000"/><rect x="2" y="8" width="1" height="1" fill="#000"/><rect x="3" y="8" width="1" height="1" fill="#00ff00"/><rect x="4" y="8" width="2" height="1" fill="#000"/><rect x="6" y="8" width="1" height="1" fill="#008000"/><rect x="7" y="8" width="3" height="1" fill="#000"/><rect x="10" y="8" width="1" height="1" fill="#008000"/><rect x="11" y="8" width="2" height="1" fill="#000"/><rect x="0" y="9" width="2" height="1" fill="#008000"/><rect x="2" y="9" width="1" height="1" fill="#000"/><rect x="3" y="9" width="1" height="1" fill="#00ff00"/><rect x="4" y="9" width="3" height="1" fill="#000"/><rect x="7" y="9" width="2" height="1" fill="#0000ff"/><rect x="9" y="9" width="1" height="1" fill="#000"/><rect x="10" y="9" width="3" height="1" fill="#008000"/><rect x="0" y="10" width="1" height="1" fill="#008000"/><rect x="1" y="10" width="4" height="1" fill="#000"/><rect x="5" y="10" width="1" height="1" fill="#008000"/><rect x="6" y="10" width="4" height="1" fill="#000"/><rect x="10" y="10" width="3" height="1" fill="#008000"/><rect x="0" y="11" width="4" height="1" fill="#000"/><rect x="4" y="11" width="9" height="1" fill="#008000"/><rect x="0" y="12" width="4" height="1" fill="#000"/><rect x="4" y="12" width="9" height="1" fill="#008000"/></svg>
<div style="left:697px;top:244px;width:15px;height:20px;border:1px solid #b4b4b4;border-left:none;border-radius:0 4px 4px 0;background:linear-gradient(#f6f6f6 0%,#f2f2f2 48%,#e8e8e8 52%,#ececec 100%);"></div>
<svg style="left:701px;top:252px" width="8" height="5" viewBox="0 0 8 5"><path d="M0 0 L7.4 0 L3.7 4 Z" fill="#111"/></svg>
<div style="left:718px;top:248px;width:12px;height:12px;background:#f5f5f5;"></div>
<svg style="left:717px;top:247px" width="14" height="14" viewBox="0 0 14 14" shape-rendering="crispEdges"><rect x="1" y="0" width="12" height="1" fill="#808080"/><rect x="0" y="1" width="1" height="1" fill="#808080"/><rect x="13" y="1" width="1" height="1" fill="#808080"/><rect x="0" y="2" width="1" height="1" fill="#808080"/><rect x="13" y="2" width="1" height="1" fill="#808080"/><rect x="0" y="3" width="1" height="1" fill="#808080"/><rect x="8" y="3" width="1" height="1" fill="#000"/><rect x="13" y="3" width="1" height="1" fill="#808080"/><rect x="0" y="4" width="1" height="1" fill="#808080"/><rect x="4" y="4" width="2" height="1" fill="#800000"/><rect x="7" y="4" width="1" height="1" fill="#000"/><rect x="8" y="4" width="1" height="1" fill="#fff"/><rect x="9" y="4" width="1" height="1" fill="#000"/><rect x="13" y="4" width="1" height="1" fill="#808080"/><rect x="0" y="5" width="1" height="1" fill="#808080"/><rect x="3" y="5" width="2" height="1" fill="#800000"/><rect x="6" y="5" width="1" height="1" fill="#000"/><rect x="7" y="5" width="1" height="1" fill="#fff"/><rect x="8" y="5" width="1" height="1" fill="#000"/><rect x="9" y="5" width="1" height="1" fill="#fff"/><rect x="10" y="5" width="1" height="1" fill="#000"/><rect x="13" y="5" width="1" height="1" fill="#808080"/><rect x="0" y="6" width="1" height="1" fill="#808080"/><rect x="2" y="6" width="2" height="1" fill="#800000"/><rect x="5" y="6" width="1" height="1" fill="#000"/><rect x="6" y="6" width="1" height="1" fill="#b00000"/><rect x="7" y="6" width="1" height="1" fill="#000"/><rect x="8" y="6" width="2" height="1" fill="#b00000"/><rect x="10" y="6" width="2" height="1" fill="#000"/><rect x="13" y="6" width="1" height="1" fill="#808080"/><rect x="0" y="7" width="1" height="1" fill="#808080"/><rect x="2" y="7" width="3" height="1" fill="#800000"/><rect x="6" y="7" width="1" height="1" fill="#000"/><rect x="7" y="7" width="2" height="1" fill="#b00000"/><rect x="9" y="7" width="1" height="1" fill="#000"/><rect x="10" y="7" width="1" height="1" fill="#b00000"/><rect x="11" y="7" width="2" height="1" fill="#000"/><rect x="13" y="7" width="1" height="1" fill="#808080"/><rect x="0" y="8" width="1" height="1" fill="#808080"/><rect x="2" y="8" width="3" height="1" fill="#800000"/><rect x="7" y="8" width="1" height="1" fill="#000"/><rect x="8" y="8" width="1" height="1" fill="#b00000"/><rect x="9" y="8" width="1" height="1" fill="#000"/><rect x="10" y="8" width="1" height="1" fill="#b00000"/><rect x="11" y="8" width="1" height="1" fill="#000"/><rect x="13" y="8" width="1" height="1" fill="#808080"/><rect x="0" y="9" width="1" height="1" fill="#808080"/><rect x="3" y="9" width="2" height="1" fill="#800000"/><rect x="8" y="9" width="1" height="1" fill="#000"/><rect x="9" y="9" width="1" height="1" fill="#b00000"/><rect x="10" y="9" width="1" height="1" fill="#000"/><rect x="13" y="9" width="1" height="1" fill="#808080"/><rect x="0" y="10" width="1" height="1" fill="#808080"/><rect x="3" y="10" width="2" height="1" fill="#800000"/><rect x="9" y="10" width="1" height="1" fill="#000"/><rect x="13" y="10" width="1" height="1" fill="#808080"/><rect x="0" y="11" width="1" height="1" fill="#808080"/><rect x="4" y="11" width="1" height="1" fill="#800000"/><rect x="13" y="11" width="1" height="1" fill="#808080"/><rect x="0" y="12" width="1" height="1" fill="#808080"/><rect x="4" y="12" width="1" height="1" fill="#800000"/><rect x="13" y="12" width="1" height="1" fill="#808080"/><rect x="1" y="13" width="12" height="1" fill="#808080"/></svg>
<div class="btnd" style="left:757px;top:244px;width:98px;height:21px;"></div>
<span class="t" style="left:771.50px;top:247px;font-size:12px;line-height:14px;color:#838383;letter-spacing:-0.594px;word-spacing:0.594px;">S-Curve Color</span>
<span class="t" style="left:39.00px;top:273px;font-size:12px;line-height:14px;letter-spacing:-0.377px;word-spacing:0.377px;">Bar Type:</span>
<div class="btn" style="left:96px;top:268px;width:102px;height:21px;"></div>
<svg style="left:186px;top:277px" width="8" height="5" viewBox="0 0 8 5"><path d="M0 0 L7 0 L3.5 4 Z" fill="#000"/></svg>
<span class="t" style="left:101.00px;top:272px;font-size:12px;line-height:14px;letter-spacing:-0.330px;">Bar</span>
<div class="btn" style="left:205px;top:267px;width:82px;height:21px;"></div>
<span class="t" style="left:222.00px;top:270px;font-size:12px;line-height:14px;letter-spacing:-0.384px;word-spacing:0.384px;">Bar Color</span>
<span class="t" style="left:296.00px;top:273px;font-size:12px;line-height:14px;letter-spacing:-0.358px;word-spacing:0.358px;">Line Index:</span>
<div class="btnd" style="left:359px;top:268px;width:145px;height:21px;"></div>
<svg style="left:492px;top:277px" width="8" height="5" viewBox="0 0 8 5"><path d="M0 0 L7 0 L3.5 4 Z" fill="#9a9a9a"/></svg>
<div style="left:505px;top:284px;width:26px;height:2px;background:#7f7f7f;"></div>
<svg style="left:506px;top:273px" width="10" height="8" viewBox="0 0 10 8"><path d="M0.2 4 L4.2 0.4 L4.2 2.8 L9.6 2.8 L9.6 5.2 L4.2 5.2 L4.2 7.6 Z" fill="#808080"/></svg>
<span class="t" style="left:517.00px;top:268px;font-size:17px;line-height:19px;color:#808080;font-weight:bold;font-family:'Liberation Serif', serif;">A</span>
<div style="left:533.5px;top:284px;width:26px;height:2px;background:#7f7f7f;"></div>
<svg style="left:534.5px;top:273px" width="10" height="8" viewBox="0 0 10 8"><path d="M9.8 4 L5.8 0.4 L5.8 2.8 L0.4 2.8 L0.4 5.2 L5.8 5.2 L5.8 7.6 Z" fill="#808080"/></svg>
<span class="t" style="left:545.50px;top:268px;font-size:17px;line-height:19px;color:#808080;font-weight:bold;font-family:'Liberation Serif', serif;">A</span>
<div style="left:561.5px;top:284px;width:26px;height:2px;background:#7f7f7f;"></div>
<span class="t" style="left:566.00px;top:268px;font-size:17px;line-height:19px;color:#808080;font-weight:bold;font-family:'Liberation Serif', serif;">A</span>
<svg style="left:579.5px;top:271px" width="8" height="12" viewBox="0 0 8 12"><path d="M4 0.2 L7.8 4.6 L5.4 4.6 L5.4 11.6 L2.6 11.6 L2.6 4.6 L0.2 4.6 Z" fill="#808080"/></svg>
<div style="left:589.5px;top:284px;width:26px;height:2px;background:#7f7f7f;"></div>
<span class="t" style="left:594.00px;top:268px;font-size:17px;line-height:19px;color:#808080;font-weight:bold;font-family:'Liberation Serif', serif;">A</span>
<svg style="left:607.5px;top:271px" width="8" height="12" viewBox="0 0 8 12"><path d="M4 11.8 L7.8 7.4 L5.4 7.4 L5.4 0.4 L2.6 0.4 L2.6 7.4 L0.2 7.4 Z" fill="#808080"/></svg>
<div class="btn" style="left:616px;top:269px;width:103px;height:21px;"></div>
<span class="t" style="left:634.00px;top:272px;font-size:12px;line-height:14px;letter-spacing:-0.421px;word-spacing:0.421px;">Data Labels...</span>
<div class="btn" style="left:723px;top:269px;width:132px;height:21px;"></div>
<span class="t" style="left:730.50px;top:272px;font-size:12px;line-height:14px;letter-spacing:-0.368px;word-spacing:0.368px;">Custom Text Properties</span>
<div style="left:37px;top:295px;width:820px;height:327px;border-top:1px solid #a0a0a0;border-left:1px solid #a0a0a0;border-right:1px solid #fff;border-bottom:1px solid #fff;"></div>
<div style="left:38px;top:296px;width:818px;height:325px;border-top:1px solid #696969;border-left:1px solid #696969;border-right:1px solid #e3e3e3;border-bottom:1px solid #e3e3e3;background:#fff;"></div>
<span class="t" style="left:180.75px;top:304px;font-size:14.67px;line-height:16px;letter-spacing:0.013px;word-spacing:-0.013px;font-weight:bold;">Project DGS728 (FY 2014): Division:: Europe: Total Current Risk Level ($)</span>
<svg style="left:39px;top:297px" width="816" height="324" viewBox="39 297 816 324"><defs><linearGradient id="bg" x1="0" y1="0" x2="0" y2="1"><stop offset="0" stop-color="#7cfc00"/><stop offset="1" stop-color="#008000"/></linearGradient></defs><rect x="160.00" y="577.98" width="19.5" height="2.02" fill="url(#bg)"/><rect x="187.69" y="575.96" width="19.5" height="4.04" fill="url(#bg)"/><rect x="215.38" y="569.90" width="19.5" height="10.10" fill="url(#bg)"/><rect x="243.06" y="557.78" width="19.5" height="22.22" fill="url(#bg)"/><rect x="270.75" y="545.66" width="19.5" height="34.34" fill="url(#bg)"/><rect x="298.44" y="521.42" width="19.5" height="58.58" fill="url(#bg)"/><rect x="326.14" y="489.10" width="19.5" height="90.90" fill="url(#bg)"/><rect x="353.82" y="468.90" width="19.5" height="111.10" fill="url(#bg)"/><rect x="381.52" y="418.40" width="19.5" height="161.60" fill="url(#bg)"/><rect x="409.20" y="418.40" width="19.5" height="161.60" fill="url(#bg)"/><rect x="436.90" y="378.00" width="19.5" height="202.00" fill="url(#bg)"/><rect x="464.58" y="373.96" width="19.5" height="206.04" fill="url(#bg)"/><rect x="492.28" y="337.60" width="19.5" height="242.40" fill="url(#bg)"/><rect x="519.96" y="365.88" width="19.5" height="214.12" fill="url(#bg)"/><rect x="547.65" y="384.06" width="19.5" height="195.94" fill="url(#bg)"/><rect x="575.34" y="444.66" width="19.5" height="135.34" fill="url(#bg)"/><rect x="603.03" y="489.10" width="19.5" height="90.90" fill="url(#bg)"/><rect x="630.73" y="533.54" width="19.5" height="46.46" fill="url(#bg)"/><rect x="658.41" y="557.78" width="19.5" height="22.22" fill="url(#bg)"/><rect x="686.11" y="573.94" width="19.5" height="6.06" fill="url(#bg)"/><rect x="713.79" y="577.98" width="19.5" height="2.02" fill="url(#bg)"/><rect x="311" y="337.5" width="3" height="242.5" fill="#4169e1"/><rect x="614" y="337.5" width="2" height="242.5" fill="#9932cc"/><rect x="155.3" y="337.5" width="1.8" height="243.0" fill="#57a057"/><rect x="154" y="559.30" width="1.4" height="1.1" fill="#303030"/><rect x="153" y="539.10" width="6.5" height="1.1" fill="#1f7a1f"/><rect x="154" y="518.90" width="1.4" height="1.1" fill="#303030"/><rect x="153" y="498.70" width="6.5" height="1.1" fill="#1f7a1f"/><rect x="154" y="478.50" width="1.4" height="1.1" fill="#303030"/><rect x="153" y="458.30" width="6.5" height="1.1" fill="#1f7a1f"/><rect x="154" y="438.10" width="1.4" height="1.1" fill="#303030"/><rect x="153" y="417.90" width="6.5" height="1.1" fill="#1f7a1f"/><rect x="154" y="397.70" width="1.4" height="1.1" fill="#303030"/><rect x="153" y="377.50" width="6.5" height="1.1" fill="#1f7a1f"/><rect x="154" y="357.30" width="1.4" height="1.1" fill="#303030"/><rect x="153" y="337.10" width="6.5" height="1.1" fill="#1f7a1f"/><rect x="153" y="579.5" width="584.89" height="1.2" fill="#000"/><rect x="155.10" y="576.6" width="1.1" height="6.8" fill="#000"/><rect x="168.94" y="580" width="1.1" height="2.4" fill="#000"/><rect x="182.79" y="576.6" width="1.1" height="6.8" fill="#000"/><rect x="196.63" y="580" width="1.1" height="2.4" fill="#000"/><rect x="210.48" y="576.6" width="1.1" height="6.8" fill="#000"/><rect x="224.32" y="580" width="1.1" height="2.4" fill="#000"/><rect x="238.17" y="576.6" width="1.1" height="6.8" fill="#000"/><rect x="252.02" y="580" width="1.1" height="2.4" fill="#000"/><rect x="265.86" y="576.6" width="1.1" height="6.8" fill="#000"/><rect x="279.71" y="580" width="1.1" height="2.4" fill="#000"/><rect x="293.55" y="576.6" width="1.1" height="6.8" fill="#000"/><rect x="307.40" y="580" width="1.1" height="2.4" fill="#000"/><rect x="321.24" y="576.6" width="1.1" height="6.8" fill="#000"/><rect x="335.09" y="580" width="1.1" height="2.4" fill="#000"/><rect x="348.93" y="576.6" width="1.1" height="6.8" fill="#000"/><rect x="362.78" y="580" width="1.1" height="2.4" fill="#000"/><rect x="376.62" y="576.6" width="1.1" height="6.8" fill="#000"/><rect x="390.47" y="580" width="1.1" height="2.4" fill="#000"/><rect x="404.31" y="576.6" width="1.1" height="6.8" fill="#000"/><rect x="418.16" y="580" width="1.1" height="2.4" fill="#000"/><rect x="432.00" y="576.6" width="1.1" height="6.8" fill="#000"/><rect x="445.85" y="580" width="1.1" height="2.4" fill="#000"/><rect x="459.69" y="576.6" width="1.1" height="6.8" fill="#000"/><rect x="473.54" y="580" width="1.1" height="2.4" fill="#000"/><rect x="487.38" y="576.6" width="1.1" height="6.8" fill="#000"/><rect x="501.23" y="580" width="1.1" height="2.4" fill="#000"/><rect x="515.07" y="576.6" width="1.1" height="6.8" fill="#000"/><rect x="528.92" y="580" width="1.1" height="2.4" fill="#000"/><rect x="542.76" y="576.6" width="1.1" height="6.8" fill="#000"/><rect x="556.61" y="580" width="1.1" height="2.4" fill="#000"/><rect x="570.45" y="576.6" width="1.1" height="6.8" fill="#000"/><rect x="584.30" y="580" width="1.1" height="2.4" fill="#000"/><rect x="598.14" y="576.6" width="1.1" height="6.8" fill="#000"/><rect x="611.99" y="580" width="1.1" height="2.4" fill="#000"/><rect x="625.83" y="576.6" width="1.1" height="6.8" fill="#000"/><rect x="639.68" y="580" width="1.1" height="2.4" fill="#000"/><rect x="653.52" y="576.6" width="1.1" height="6.8" fill="#000"/><rect x="667.37" y="580" width="1.1" height="2.4" fill="#000"/><rect x="681.21" y="576.6" width="1.1" height="6.8" fill="#000"/><rect x="695.06" y="580" width="1.1" height="2.4" fill="#000"/><rect x="708.90" y="576.6" width="1.1" height="6.8" fill="#000"/><rect x="722.75" y="580" width="1.1" height="2.4" fill="#000"/><rect x="736.59" y="576.6" width="1.1" height="6.8" fill="#000"/></svg>
<span class="t" style="left:131.25px;top:574px;font-size:10.67px;line-height:12px;color:#006400;">0.00</span>
<span class="t" style="left:125.33px;top:534px;font-size:10.67px;line-height:12px;color:#006400;">20.00</span>
<span class="t" style="left:125.33px;top:493px;font-size:10.67px;line-height:12px;color:#006400;">40.00</span>
<span class="t" style="left:125.33px;top:453px;font-size:10.67px;line-height:12px;color:#006400;">60.00</span>
<span class="t" style="left:125.33px;top:412px;font-size:10.67px;line-height:12px;color:#006400;">80.00</span>
<span class="t" style="left:119.41px;top:372px;font-size:10.67px;line-height:12px;color:#006400;">100.00</span>
<span class="t" style="left:119.41px;top:332px;font-size:10.67px;line-height:12px;color:#006400;">120.00</span>
<span class="t" style="left:143.67px;top:583px;font-size:10.67px;line-height:12px;">272,830.52</span>
<span class="t" style="left:254.43px;top:583px;font-size:10.67px;line-height:12px;">292,539.55</span>
<span class="t" style="left:365.19px;top:583px;font-size:10.67px;line-height:12px;">312,248.58</span>
<span class="t" style="left:475.95px;top:583px;font-size:10.67px;line-height:12px;">331,957.61</span>
<span class="t" style="left:586.71px;top:583px;font-size:10.67px;line-height:12px;">351,666.64</span>
<span class="t" style="left:697.47px;top:583px;font-size:10.67px;line-height:12px;">371,375.67</span>
<span class="t" style="left:0.00px;top:-10px;font-size:10.67px;line-height:12px;color:#0c6c0c;left:46px;top:452.5px;letter-spacing:0.12px;transform:rotate(-90deg);transform-origin:50% 50%;">Frequency</span>
<div class="lv" style="left:877px;top:167px;width:329px;height:259px;"></div>
<div class="hdr" style="left:879px;top:168px;width:324px;height:24px;"></div>
<div style="left:1037px;top:168px;width:1px;height:23px;background:#e2e4ea;"></div>
<div style="left:1038px;top:168px;width:1px;height:23px;background:#fff;"></div>
<div style="left:1168px;top:168px;width:1px;height:23px;background:#e2e4ea;"></div>
<div style="left:1169px;top:168px;width:1px;height:23px;background:#fff;"></div>
<div style="left:879px;top:208px;width:324px;height:1px;background:#ececec;"></div>
<div style="left:879px;top:225px;width:324px;height:1px;background:#ececec;"></div>
<div style="left:879px;top:242px;width:324px;height:1px;background:#ececec;"></div>
<div style="left:879px;top:259px;width:324px;height:1px;background:#ececec;"></div>
<div style="left:879px;top:276px;width:324px;height:1px;background:#ececec;"></div>
<div style="left:879px;top:293px;width:324px;height:1px;background:#ececec;"></div>
<div style="left:879px;top:310px;width:324px;height:1px;background:#ececec;"></div>
<div style="left:879px;top:327px;width:324px;height:1px;background:#ececec;"></div>
<div style="left:879px;top:344px;width:324px;height:1px;background:#ececec;"></div>
<div style="left:879px;top:361px;width:324px;height:1px;background:#ececec;"></div>
<div style="left:879px;top:378px;width:324px;height:1px;background:#ececec;"></div>
<div style="left:879px;top:395px;width:324px;height:1px;background:#ececec;"></div>
<div style="left:879px;top:412px;width:324px;height:1px;background:#ececec;"></div>
<div style="left:1038px;top:193px;width:1px;height:231px;background:#ececec;"></div>
<div style="left:1168px;top:193px;width:1px;height:231px;background:#ececec;"></div>
<span class="t" style="left:934.00px;top:175px;font-size:11px;line-height:12px;letter-spacing:-0.214px;">Percentile</span>
<span class="t" style="left:1089.75px;top:175px;font-size:11px;line-height:12px;letter-spacing:-0.457px;">Value</span>
<span class="t" style="left:950.55px;top:195px;font-size:11px;line-height:12px;">0%</span>
<span class="t" style="left:1069.25px;top:195px;font-size:11px;line-height:12px;letter-spacing:0.018px;">272,830.5194</span>
<span class="t" style="left:950.55px;top:212px;font-size:11px;line-height:12px;">5%</span>
<span class="t" style="left:1069.25px;top:212px;font-size:11px;line-height:12px;letter-spacing:0.018px;">298,318.6369</span>
<span class="t" style="left:947.48px;top:229px;font-size:11px;line-height:12px;">10%</span>
<span class="t" style="left:1069.25px;top:229px;font-size:11px;line-height:12px;letter-spacing:0.018px;">303,919.5874</span>
<span class="t" style="left:947.48px;top:246px;font-size:11px;line-height:12px;">20%</span>
<span class="t" style="left:1069.25px;top:246px;font-size:11px;line-height:12px;letter-spacing:0.092px;">311,735.9746</span>
<span class="t" style="left:947.48px;top:263px;font-size:11px;line-height:12px;">30%</span>
<span class="t" style="left:1069.25px;top:263px;font-size:11px;line-height:12px;letter-spacing:0.018px;">318,289.3292</span>
<span class="t" style="left:947.48px;top:280px;font-size:11px;line-height:12px;">40%</span>
<span class="t" style="left:1069.25px;top:280px;font-size:11px;line-height:12px;letter-spacing:0.018px;">323,342.2748</span>
<span class="t" style="left:947.48px;top:297px;font-size:11px;line-height:12px;">50%</span>
<span class="t" style="left:1069.25px;top:297px;font-size:11px;line-height:12px;letter-spacing:0.018px;">328,157.9192</span>
<span class="t" style="left:947.48px;top:314px;font-size:11px;line-height:12px;">60%</span>
<span class="t" style="left:1069.25px;top:314px;font-size:11px;line-height:12px;letter-spacing:0.018px;">332,609.1326</span>
<span class="t" style="left:947.48px;top:331px;font-size:11px;line-height:12px;">70%</span>
<span class="t" style="left:1069.25px;top:331px;font-size:11px;line-height:12px;letter-spacing:0.018px;">336,801.1548</span>
<span class="t" style="left:947.48px;top:348px;font-size:11px;line-height:12px;">80%</span>
<span class="t" style="left:1069.25px;top:348px;font-size:11px;line-height:12px;letter-spacing:0.018px;">341,608.3867</span>
<span class="t" style="left:947.48px;top:365px;font-size:11px;line-height:12px;">90%</span>
<span class="t" style="left:1069.25px;top:365px;font-size:11px;line-height:12px;letter-spacing:0.018px;">347,462.2976</span>
<span class="t" style="left:947.48px;top:382px;font-size:11px;line-height:12px;">95%</span>
<span class="t" style="left:1069.25px;top:382px;font-size:11px;line-height:12px;letter-spacing:0.018px;">352,084.8208</span>
<span class="t" style="left:944.43px;top:399px;font-size:11px;line-height:12px;">100%</span>
<span class="t" style="left:1069.25px;top:399px;font-size:11px;line-height:12px;letter-spacing:0.018px;">371,375.6742</span>
<div class="lv" style="left:877px;top:432px;width:329px;height:210px;"></div>
<div class="hdr" style="left:879px;top:433px;width:324px;height:24px;"></div>
<div style="left:1037px;top:433px;width:1px;height:23px;background:#e2e4ea;"></div>
<div style="left:1038px;top:433px;width:1px;height:23px;background:#fff;"></div>
<div style="left:1168px;top:433px;width:1px;height:23px;background:#e2e4ea;"></div>
<div style="left:1169px;top:433px;width:1px;height:23px;background:#fff;"></div>
<div style="left:879px;top:474px;width:324px;height:1px;background:#ececec;"></div>
<div style="left:879px;top:491px;width:324px;height:1px;background:#ececec;"></div>
<div style="left:879px;top:508px;width:324px;height:1px;background:#ececec;"></div>
<div style="left:879px;top:525px;width:324px;height:1px;background:#ececec;"></div>
<div style="left:879px;top:542px;width:324px;height:1px;background:#ececec;"></div>
<div style="left:879px;top:559px;width:324px;height:1px;background:#ececec;"></div>
<div style="left:879px;top:576px;width:324px;height:1px;background:#ececec;"></div>
<div style="left:879px;top:593px;width:324px;height:1px;background:#ececec;"></div>
<div style="left:879px;top:610px;width:324px;height:1px;background:#ececec;"></div>
<div style="left:879px;top:627px;width:324px;height:1px;background:#ececec;"></div>
<div style="left:1038px;top:458px;width:1px;height:182px;background:#ececec;"></div>
<div style="left:1168px;top:458px;width:1px;height:182px;background:#ececec;"></div>
<span class="t" style="left:884.50px;top:440px;font-size:11px;line-height:12px;letter-spacing:-0.113px;">Statistics</span>
<span class="t" style="left:1089.75px;top:440px;font-size:11px;line-height:12px;letter-spacing:-0.457px;">Value</span>
<span class="t" style="left:884.50px;top:461px;font-size:11px;line-height:12px;letter-spacing:-0.150px;">Trials</span>
<span class="t" style="left:1089.23px;top:461px;font-size:11px;line-height:12px;">1,000</span>
<span class="t" style="left:884.50px;top:478px;font-size:11px;line-height:12px;letter-spacing:-0.150px;">Mean</span>
<span class="t" style="left:1069.35px;top:478px;font-size:11px;line-height:12px;">326,835.5804</span>
<span class="t" style="left:884.50px;top:495px;font-size:11px;line-height:12px;letter-spacing:-0.150px;">Median</span>
<span class="t" style="left:1069.35px;top:495px;font-size:11px;line-height:12px;">328,157.9192</span>
<span class="t" style="left:884.50px;top:512px;font-size:11px;line-height:12px;letter-spacing:-0.150px;">Stdev</span>
<span class="t" style="left:1072.41px;top:512px;font-size:11px;line-height:12px;">16,768.7251</span>
<span class="t" style="left:884.50px;top:529px;font-size:11px;line-height:12px;letter-spacing:-0.150px;">CV</span>
<span class="t" style="left:1081.28px;top:529px;font-size:11px;line-height:12px;">5.1306%</span>
<span class="t" style="left:884.50px;top:546px;font-size:11px;line-height:12px;letter-spacing:-0.150px;">Skew</span>
<span class="t" style="left:1084.34px;top:546px;font-size:11px;line-height:12px;">-0.2825</span>
<span class="t" style="left:884.50px;top:563px;font-size:11px;line-height:12px;letter-spacing:-0.150px;">Kurtosis</span>
<span class="t" style="left:1084.75px;top:563px;font-size:11px;line-height:12px;">-0.3113</span>
<span class="t" style="left:884.50px;top:580px;font-size:11px;line-height:12px;letter-spacing:-0.150px;">Minimum</span>
<span class="t" style="left:1069.35px;top:580px;font-size:11px;line-height:12px;">272,830.5194</span>
<span class="t" style="left:884.50px;top:597px;font-size:11px;line-height:12px;letter-spacing:-0.150px;">Maximum</span>
<span class="t" style="left:1069.35px;top:597px;font-size:11px;line-height:12px;">371,375.6742</span>
<span class="t" style="left:884.50px;top:614px;font-size:11px;line-height:12px;letter-spacing:-0.150px;">Range</span>
<span class="t" style="left:1072.41px;top:614px;font-size:11px;line-height:12px;">98,545.1548</span>
<span class="t" style="left:30.50px;top:655px;font-size:11px;line-height:12px;letter-spacing:-0.155px;word-spacing:0.505px;">Show vertical lines at:</span>
<div class="btn" style="left:249px;top:650px;width:180px;height:21px;"></div>
<svg style="left:417px;top:659px" width="8" height="5" viewBox="0 0 8 5"><path d="M0 0 L7 0 L3.5 4 Z" fill="#000"/></svg>
<span class="t" style="left:252.00px;top:655px;font-size:11px;line-height:12px;letter-spacing:-0.503px;word-spacing:0.853px;">PDF Histogram</span>
<div class="btn" style="left:436px;top:650px;width:85px;height:21px;"></div>
<span class="t" style="left:460.50px;top:655px;font-size:11px;line-height:12px;letter-spacing:-0.097px;">Update</span>
<span class="t" style="left:30.50px;top:689px;font-size:11px;line-height:12px;letter-spacing:-0.097px;word-spacing:0.447px;">Percentiles %:</span>
<span class="t" style="left:30.50px;top:712px;font-size:11px;line-height:12px;letter-spacing:-0.054px;word-spacing:0.404px;">Certainty Values:</span>
<div class="tbx" style="left:157px;top:683px;width:86px;height:20px;"></div>
<div class="tbx" style="left:157px;top:707px;width:86px;height:20px;"></div>
<div class="tbx" style="left:249px;top:683px;width:86px;height:20px;"></div>
<div class="tbx" style="left:249px;top:707px;width:86px;height:20px;"></div>
<div class="tbx" style="left:342px;top:683px;width:87px;height:20px;"></div>
<div class="tbx" style="left:342px;top:707px;width:87px;height:20px;"></div>
<div class="tbx" style="left:435px;top:683px;width:87px;height:20px;"></div>
<div class="tbx" style="left:435px;top:707px;width:87px;height:20px;"></div>
<div class="btn" style="left:158px;top:734px;width:177px;height:21px;"></div>
<span class="t" style="left:219.00px;top:739px;font-size:11px;line-height:12px;letter-spacing:-0.124px;word-spacing:0.474px;">Copy Chart</span>
<div class="btn" style="left:343px;top:734px;width:178px;height:21px;"></div>
<span class="t" style="left:396.50px;top:739px;font-size:11px;line-height:12px;letter-spacing:-0.445px;word-spacing:0.795px;">Show Gridlines</span>
<span class="t" style="left:538.50px;top:655px;font-size:11px;line-height:12px;letter-spacing:-0.285px;word-spacing:0.635px;">Compute and Show lines at:</span>
<div class="btn" style="left:730px;top:650px;width:143px;height:21px;"></div>
<svg style="left:861px;top:659px" width="8" height="5" viewBox="0 0 8 5"><path d="M0 0 L7 0 L3.5 4 Z" fill="#000"/></svg>
<span class="t" style="left:734.00px;top:655px;font-size:11px;line-height:12px;letter-spacing:-0.271px;word-spacing:0.621px;">Two Tails</span>
<span class="t" style="left:538.50px;top:689px;font-size:11px;line-height:12px;letter-spacing:-0.180px;">Percentiles:</span>
<span class="t" style="left:538.50px;top:712px;font-size:11px;line-height:12px;letter-spacing:-0.175px;">Value:</span>
<div class="tbx" style="left:637px;top:683px;width:72px;height:20px;"></div>
<span class="t" style="left:669.94px;top:687px;font-size:11px;line-height:12px;">5</span>
<span class="t" style="left:712.00px;top:689px;font-size:11px;line-height:12px;">%</span>
<div class="tbxf" style="left:730px;top:683px;width:72px;height:20px;"></div>
<span class="t" style="left:759.88px;top:687px;font-size:11px;line-height:12px;">95</span>
<span class="t" style="left:805.00px;top:689px;font-size:11px;line-height:12px;">%</span>
<div class="tbx" style="left:637px;top:707px;width:87px;height:20px;"></div>
<span class="t" style="left:652.50px;top:711px;font-size:11px;line-height:12px;letter-spacing:0.104px;">298,318.64</span>
<div class="tbx" style="left:730px;top:707px;width:87px;height:20px;"></div>
<span class="t" style="left:745.50px;top:711px;font-size:11px;line-height:12px;letter-spacing:0.104px;">352,084.82</span>
<div class="btn" style="left:638px;top:734px;width:234px;height:21px;"></div>
<span class="t" style="left:698.25px;top:739px;font-size:11px;line-height:12px;letter-spacing:-0.157px;word-spacing:0.507px;">Extract Simulation Data</span>
<div class="btn" style="left:878px;top:734px;width:148px;height:21px;"></div>
<span class="t" style="left:938.26px;top:739px;font-size:11px;line-height:12px;letter-spacing:-0.150px;">Open</span>
<div class="btn" style="left:1031px;top:734px;width:148px;height:21px;"></div>
<span class="t" style="left:1092.19px;top:739px;font-size:11px;line-height:12px;letter-spacing:-0.150px;">Save</span>
<div class="btn" style="left:905px;top:647px;width:37px;height:27px;"></div>
<div class="btn" style="left:950px;top:647px;width:37px;height:27px;"></div>
<svg style="left:914px;top:650px" width="20" height="20" viewBox="0 0 20 20"><defs><linearGradient id="xg" x1="0" y1="0" x2="1" y2="1"><stop offset="0" stop-color="#dff3d8"/><stop offset=".5" stop-color="#8fd088"/><stop offset="1" stop-color="#52b050"/></linearGradient></defs><path d="M3 0.5 L18 0.5 L18.8 1.5 L18.8 18 L18 19 L1 19.5 L0.3 18 L0.3 3.5 Z" fill="url(#xg)"/><path d="M0.8 3.5 L0.8 18.5" stroke="#2f9d2f" stroke-width="1.2"/><path d="M3 1 L18 1" stroke="#e4f7df" stroke-width="1"/><path d="M1.5 17.2 L7 12.8 L18.6 9.8 L18.6 17.6 L17.8 18.6 L1.5 19 Z" fill="#f2faf0"/><path d="M9 13.2 L18 11 M8.5 15.4 L18 13.4 M5 17 L18 15.8 M12.6 12.2 L13 18.4 M15.8 11.4 L16.2 18.2" stroke="#7cc47a" stroke-width=".7" fill="none"/><path d="M3.2 14.8 L8.6 3.6 L11.2 3.6 L5.8 14.8 Z" fill="#6cc040"/><path d="M3.4 3.6 L6.2 3.6 L11.6 14.8 L8.6 14.8 Z" fill="#1f7030"/></svg>
<svg style="left:961px;top:653px" width="16" height="15" viewBox="0 0 16 15"><path d="M0.5 0.8 L5 0.8 L7.5 3.2 L7.5 9.6 L0.5 9.6 Z" fill="#fdfdf2" stroke="#c4ccc0" stroke-width=".8"/><path d="M2 3.4 L4.6 3.4 M2 5.2 L5.6 5.2 M2 7 L5.6 7 M2 3.4 L2 7.4" stroke="#b9c4b4" stroke-width=".9"/><path d="M6.4 3.6 L11 3.6 L14.6 7 L14.6 13.4 L6.4 13.4 Z" fill="#fdfdf2" stroke="#b8b4c8" stroke-width=".8"/><path d="M11 3.6 L11 7 L14.6 7" fill="#d8d4e4" stroke="#b8b4c8" stroke-width=".7"/><path d="M8 6.4 L10 6.4 M8 8.4 L12.6 8.4 M8 10.4 L12.6 10.4 M8 6.4 L8 11.6" stroke="#c0bcc8" stroke-width=".9"/><path d="M9.4 12.9 L14.2 12.9 L14.2 9.4" stroke="#c4c0d4" stroke-width="1" fill="none"/></svg>
<div style="left:1030px;top:649px;width:60px;height:23px;border:1px solid #e2e6ec;border-top-color:#c4cad4;border-bottom-color:#d4e0f0;background:#f3f3f3;"></div>
<div style="left:1071px;top:649px;width:19px;height:23px;border:1px solid #a9a9a9;border-left:none;background:#f3f3f3;"></div>
<span class="t" style="left:1049.24px;top:653px;font-size:11px;line-height:12px;">4</span>
<div style="left:1073px;top:651px;width:15px;height:9px;border:1px solid #a6a6a6;background:linear-gradient(#f6f6f6,#e9e9e9);"></div>
<div style="left:1073px;top:661px;width:15px;height:9px;border:1px solid #a6a6a6;background:linear-gradient(#f6f6f6,#e9e9e9);"></div>
<svg style="left:1077px;top:653px" width="7" height="5" viewBox="0 0 7 5"><path d="M3.5 0.6 L6.4 3.8 L0.6 3.8 Z" fill="#5568c0"/></svg>
<svg style="left:1077px;top:664px" width="7" height="5" viewBox="0 0 7 5"><path d="M3.5 3.9 L6.4 0.7 L0.6 0.7 Z" fill="#5568c0"/></svg>
<span class="t" style="left:1095.50px;top:655px;font-size:11px;line-height:12px;transform:scaleX(0.9241);transform-origin:0 0;">Decimals</span>
</body></html>
